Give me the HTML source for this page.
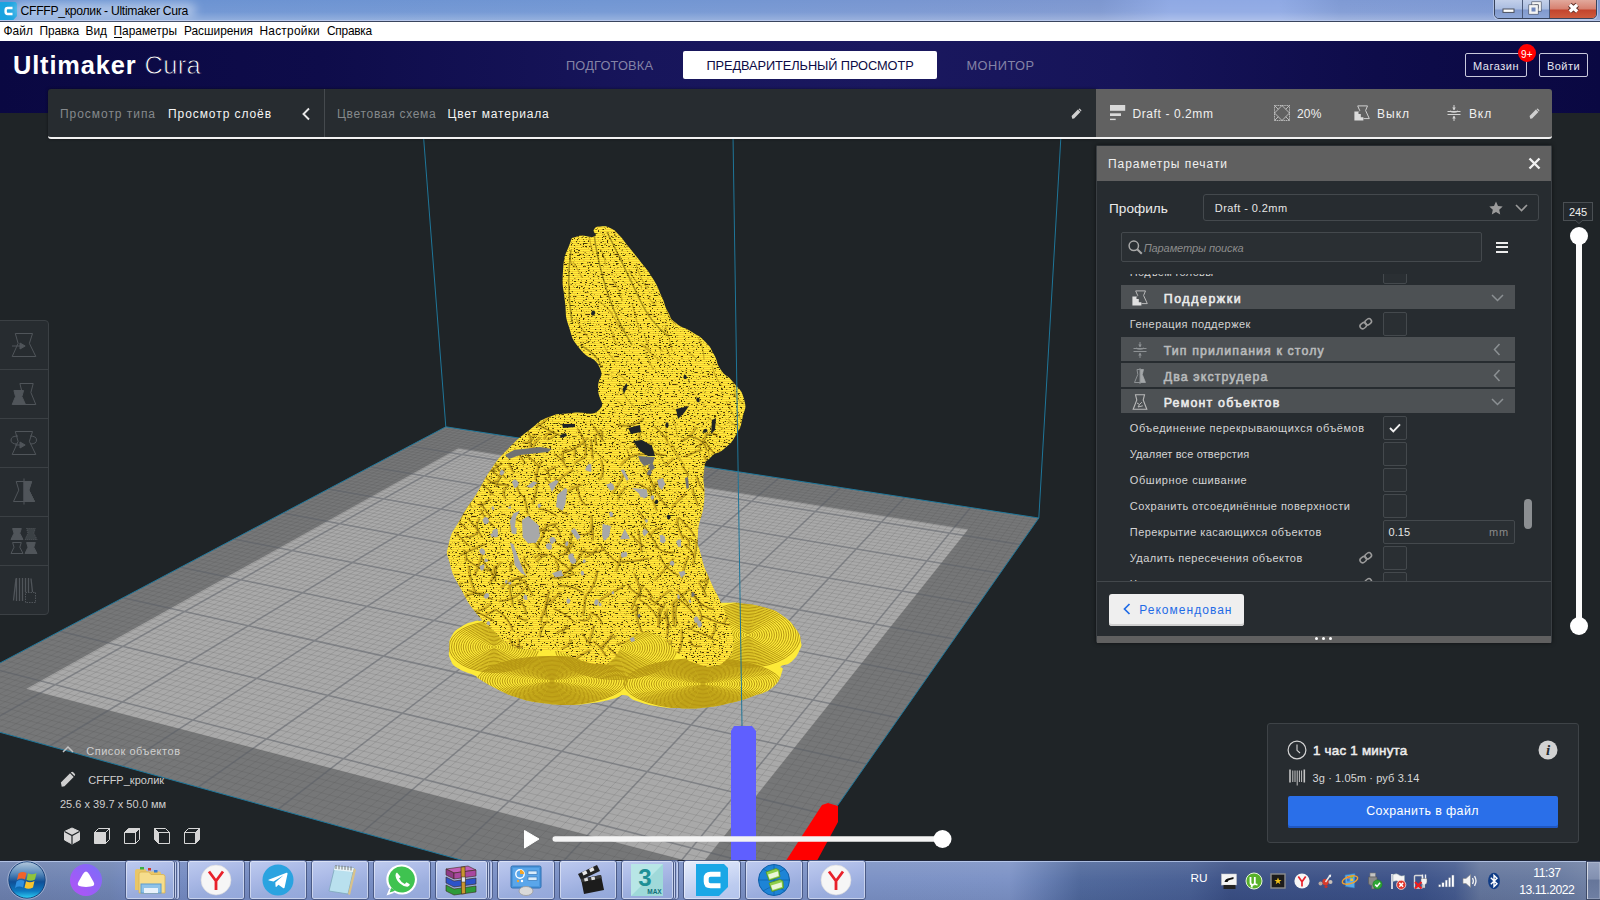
<!DOCTYPE html>
<html lang="ru"><head><meta charset="utf-8"><title>CFFFP_кролик - Ultimaker Cura</title>
<style>
html,body{margin:0;padding:0;overflow:hidden;}
body{width:1600px;height:900px;overflow:hidden;position:relative;background:#1f2427;font-family:"Liberation Sans", "DejaVu Sans", sans-serif;}
.t{position:absolute;white-space:pre;}
.abs{position:absolute;}
svg{position:absolute;overflow:visible;}
</style></head>
<body>
<!-- scene -->
<main id="viewport">
<svg width="1600" height="900" viewBox="0 0 1600 900" style="left:0;top:0">
<defs>
<filter id="speck" x="0" y="0" width="100%" height="100%" color-interpolation-filters="sRGB"><feTurbulence type="fractalNoise" baseFrequency="0.42 0.9" numOctaves="2" seed="5" result="n"/><feColorMatrix in="n" type="matrix" values="0 0 0 0 0.27  0 0 0 0 0.22  0 0 0 0 0.02  10 0 0 0 -6.05" result="d"/><feComposite in="d" in2="SourceGraphic" operator="in" result="dd"/><feMerge><feMergeNode in="SourceGraphic"/><feMergeNode in="dd"/></feMerge></filter>
<pattern id="rows" width="4" height="2" patternUnits="userSpaceOnUse"><rect width="4" height="2" fill="#ffee3a"/><rect y="1" width="4" height="1" fill="#f3cb33"/></pattern>
<clipPath id="vp"><rect x="0" y="113" width="1600" height="747"/></clipPath>
</defs>
<g clip-path="url(#vp)">
<polygon points="445.8,426.8 1038.8,518.0 744.5,938.5 -86.0,708.5" fill="#767778"/>
<polygon points="458.3,448.2 968.2,529.5 701.5,864.8 26.1,688.9" fill="#a9a9a9"/>
<path d="M450.9 427.6L-79.5 710.3M442.3 428.7L1037.0 520.6M456.0 428.4L-73.0 712.1M438.7 430.6L1035.2 523.1M461.1 429.1L-66.4 713.9M435.1 432.5L1033.4 525.7M466.2 429.9L-59.8 715.7M431.5 434.4L1031.6 528.3M471.3 430.7L-53.2 717.6M427.9 436.3L1029.7 531.0M476.5 431.5L-46.6 719.4M424.2 438.2L1027.9 533.6M481.6 432.3L-39.9 721.3M420.5 440.2L1026.0 536.3M486.8 433.1L-33.2 723.1M416.8 442.1L1024.1 539.0M492.0 433.9L-26.5 725.0M413.1 444.1L1022.2 541.7M502.4 435.5L-12.9 728.7M405.6 448.1L1018.3 547.3M507.7 436.3L-6.1 730.6M401.7 450.1L1016.4 550.0M512.9 437.1L0.7 732.5M397.9 452.2L1014.4 552.9M518.2 437.9L7.6 734.4M394.0 454.2L1012.4 555.7M523.5 438.8L14.5 736.3M390.1 456.3L1010.4 558.6M528.8 439.6L21.5 738.3M386.2 458.4L1008.4 561.5M534.1 440.4L28.5 740.2M382.3 460.5L1006.4 564.4M539.5 441.2L35.5 742.1M378.3 462.6L1004.3 567.3M544.8 442.0L42.5 744.1M374.3 464.7L1002.2 570.3M555.6 443.7L56.7 748.0M366.2 469.0L998.0 576.3M561.0 444.5L63.8 750.0M362.1 471.1L995.9 579.3M566.4 445.3L71.0 752.0M357.9 473.3L993.8 582.4M571.8 446.2L78.2 754.0M353.8 475.5L991.6 585.5M577.3 447.0L85.4 756.0M349.6 477.8L989.4 588.6M582.7 447.9L92.7 758.0M345.4 480.0L987.2 591.7M588.2 448.7L100.0 760.0M341.1 482.2L985.0 594.9M593.7 449.5L107.4 762.1M336.9 484.5L982.7 598.1M599.2 450.4L114.7 764.1M332.5 486.8L980.5 601.3M610.3 452.1L129.6 768.2M323.8 491.4L975.9 607.9M615.9 453.0L137.1 770.3M319.4 493.7L973.6 611.2M621.5 453.8L144.6 772.4M315.0 496.1L971.2 614.5M627.1 454.7L152.1 774.5M310.5 498.5L968.9 617.9M632.7 455.5L159.7 776.6M306.0 500.9L966.5 621.3M638.3 456.4L167.4 778.7M301.4 503.3L964.1 624.8M644.0 457.3L175.0 780.8M296.8 505.7L961.6 628.2M649.6 458.1L182.7 782.9M292.2 508.1L959.2 631.7M655.3 459.0L190.4 785.1M287.6 510.6L956.7 635.3M666.7 460.8L206.0 789.4M278.2 515.6L951.7 642.5M672.5 461.7L213.9 791.5M273.4 518.1L949.1 646.1M678.2 462.5L221.8 793.7M268.6 520.7L946.6 649.8M684.0 463.4L229.7 795.9M263.7 523.2L944.0 653.5M689.8 464.3L237.6 798.1M258.9 525.8L941.4 657.2M695.6 465.2L245.6 800.3M254.0 528.4L938.7 661.0M701.4 466.1L253.7 802.6M249.0 531.0L936.0 664.8M707.3 467.0L261.8 804.8M244.0 533.7L933.3 668.7M713.2 467.9L269.9 807.1M239.0 536.4L930.6 672.6M724.9 469.7L286.2 811.6M228.8 541.8L925.1 680.5M730.9 470.6L294.5 813.9M223.6 544.5L922.3 684.5M736.8 471.6L302.8 816.2M218.4 547.3L919.4 688.5M742.8 472.5L311.1 818.5M213.2 550.0L916.6 692.6M748.7 473.4L319.4 820.8M207.9 552.8L913.7 696.8M754.7 474.3L327.8 823.1M202.5 555.7L910.8 700.9M760.8 475.2L336.3 825.5M197.1 558.5L907.8 705.1M766.8 476.2L344.8 827.8M191.7 561.4L904.8 709.4M772.8 477.1L353.3 830.2M186.3 564.3L901.8 713.7M785.0 479.0L370.5 834.9M175.2 570.2L895.7 722.5M791.1 479.9L379.2 837.3M169.6 573.1L892.6 726.9M797.3 480.9L387.9 839.7M163.9 576.1L889.5 731.4M803.4 481.8L396.6 842.2M158.2 579.1L886.3 735.9M809.6 482.7L405.4 844.6M152.4 582.2L883.1 740.5M815.8 483.7L414.3 847.0M146.6 585.3L879.8 745.1M822.0 484.7L423.2 849.5M140.8 588.4L876.6 749.8M828.2 485.6L432.1 852.0M134.9 591.5L873.3 754.5M834.5 486.6L441.1 854.5M128.9 594.7L869.9 759.3M847.0 488.5L459.2 859.5M116.8 601.1L863.1 769.0M853.3 489.5L468.3 862.0M110.7 604.3L859.7 774.0M859.7 490.5L477.5 864.5M104.5 607.6L856.2 779.0M866.0 491.4L486.7 867.1M98.3 610.9L852.6 784.0M872.4 492.4L495.9 869.7M92.0 614.2L849.0 789.1M878.8 493.4L505.3 872.2M85.7 617.6L845.4 794.3M885.2 494.4L514.6 874.8M79.3 621.0L841.8 799.5M891.6 495.4L524.0 877.4M72.8 624.4L838.1 804.8M898.1 496.4L533.5 880.1M66.3 627.8L834.3 810.1M911.1 498.4L552.6 885.3M53.1 634.8L826.7 821.0M917.6 499.4L562.2 888.0M46.4 638.4L822.9 826.6M924.1 500.4L571.8 890.7M39.6 642.0L818.9 832.1M930.7 501.4L581.6 893.4M32.8 645.6L815.0 837.8M937.3 502.4L591.3 896.1M25.9 649.2L811.0 843.5M943.9 503.4L601.2 898.8M18.9 652.9L806.9 849.3M950.5 504.4L611.0 901.5M11.9 656.7L802.8 855.2M957.2 505.4L621.0 904.3M4.8 660.4L798.6 861.2M963.9 506.5L631.0 907.1M-2.4 664.2L794.4 867.2M977.3 508.5L651.1 912.6M-16.9 671.9L785.8 879.4M984.0 509.6L661.2 915.4M-24.3 675.8L781.5 885.7M990.8 510.6L671.4 918.3M-31.7 679.8L777.1 892.0M997.6 511.7L681.7 921.1M-39.3 683.7L772.6 898.4M1004.4 512.7L692.0 924.0M-46.9 687.8L768.1 904.8M1011.2 513.8L702.4 926.8M-54.5 691.8L763.5 911.4M1018.1 514.8L712.8 929.7M-62.3 695.9L758.8 918.0M1025.0 515.9L723.3 932.6M-70.1 700.1L754.1 924.8M1031.9 516.9L733.9 935.6M-78.0 704.3L749.3 931.6" stroke="#4c4e50" stroke-width="1" opacity=".17" fill="none"/>
<path d="M497.2 434.7L-19.7 726.9M409.3 446.1L1020.3 544.5M550.2 442.9L49.6 746.0M370.2 466.8L1000.1 573.2M604.8 451.2L122.2 766.1M328.2 489.1L978.2 604.6M661.0 459.9L198.2 787.2M282.9 513.1L954.2 638.9M719.0 468.8L278.0 809.3M233.9 539.1L927.9 676.5M778.9 478.0L361.9 832.5M180.7 567.2L898.8 718.1M840.7 487.5L450.1 857.0M122.9 597.8L866.5 764.1M904.6 497.4L543.0 882.7M59.7 631.3L830.6 815.5M970.6 507.5L641.0 909.8M-9.6 668.0L790.2 873.3" stroke="#585c64" stroke-width="1.5" opacity=".52" fill="none"/>
<g stroke="#1f7699" stroke-width="1" fill="none"><polygon points="445.8,426.8 1038.8,518.0 744.5,938.5 -86.0,708.5"/><path d="M445.8 426.8L423.4 135M1038.8 518L1061 135"/></g>
<clipPath id="bc"><path d="M449.3 647.8C449.6 641.6 448.5 641.8 451.6 636.3C454.7 630.8 454.6 631.0 460.8 627.0C467.0 623.0 468.0 623.1 474.7 621.2C481.4 619.3 473.9 622.5 486.0 620.0C498.1 617.5 489.6 615.7 520.0 612.0C550.4 608.3 557.3 608.4 600.0 606.0C642.7 603.6 646.8 603.9 680.0 603.0C713.2 602.1 708.3 602.6 724.5 602.7C740.7 602.8 730.1 602.0 740.6 603.2C751.1 604.4 752.7 604.0 763.8 607.3C774.9 610.6 773.7 609.5 782.3 615.4C790.9 621.3 791.2 622.5 796.1 629.3C801.0 636.1 799.9 635.4 800.8 640.9C801.7 646.4 802.1 644.6 799.6 650.1C797.1 655.6 796.4 657.4 791.5 661.7C786.6 666.0 783.6 663.8 781.1 666.3C778.6 668.8 784.5 665.5 782.3 671.0C780.1 676.5 781.0 680.3 773.0 687.1C765.0 693.9 763.9 692.1 752.2 696.4C740.5 700.7 741.4 700.3 729.1 703.3C716.8 706.3 718.3 706.1 706.0 707.5C693.7 708.9 695.1 708.6 682.8 708.4C670.5 708.2 672.0 708.8 659.7 706.8C647.4 704.8 645.9 704.1 636.6 701.0C627.3 697.9 631.2 695.8 625.0 695.2C618.8 694.6 622.8 696.5 613.5 698.7C604.2 700.9 602.6 701.6 590.3 703.3C578.0 705.0 579.5 705.0 567.2 705.0C554.9 705.0 556.3 705.0 544.0 703.3C531.7 701.6 533.3 702.4 521.0 698.7C508.7 695.0 508.9 694.7 497.8 689.4C486.7 684.1 485.5 682.7 479.3 679.0C473.1 675.3 480.2 678.4 474.7 675.6C469.2 672.8 465.0 672.9 458.5 668.6C452.0 664.3 452.9 664.9 450.4 659.4C447.9 653.9 449.0 654.0 449.3 647.8Z"/></clipPath>
<path d="M449.3 647.8C449.6 641.6 448.5 641.8 451.6 636.3C454.7 630.8 454.6 631.0 460.8 627.0C467.0 623.0 468.0 623.1 474.7 621.2C481.4 619.3 473.9 622.5 486.0 620.0C498.1 617.5 489.6 615.7 520.0 612.0C550.4 608.3 557.3 608.4 600.0 606.0C642.7 603.6 646.8 603.9 680.0 603.0C713.2 602.1 708.3 602.6 724.5 602.7C740.7 602.8 730.1 602.0 740.6 603.2C751.1 604.4 752.7 604.0 763.8 607.3C774.9 610.6 773.7 609.5 782.3 615.4C790.9 621.3 791.2 622.5 796.1 629.3C801.0 636.1 799.9 635.4 800.8 640.9C801.7 646.4 802.1 644.6 799.6 650.1C797.1 655.6 796.4 657.4 791.5 661.7C786.6 666.0 783.6 663.8 781.1 666.3C778.6 668.8 784.5 665.5 782.3 671.0C780.1 676.5 781.0 680.3 773.0 687.1C765.0 693.9 763.9 692.1 752.2 696.4C740.5 700.7 741.4 700.3 729.1 703.3C716.8 706.3 718.3 706.1 706.0 707.5C693.7 708.9 695.1 708.6 682.8 708.4C670.5 708.2 672.0 708.8 659.7 706.8C647.4 704.8 645.9 704.1 636.6 701.0C627.3 697.9 631.2 695.8 625.0 695.2C618.8 694.6 622.8 696.5 613.5 698.7C604.2 700.9 602.6 701.6 590.3 703.3C578.0 705.0 579.5 705.0 567.2 705.0C554.9 705.0 556.3 705.0 544.0 703.3C531.7 701.6 533.3 702.4 521.0 698.7C508.7 695.0 508.9 694.7 497.8 689.4C486.7 684.1 485.5 682.7 479.3 679.0C473.1 675.3 480.2 678.4 474.7 675.6C469.2 672.8 465.0 672.9 458.5 668.6C452.0 664.3 452.9 664.9 450.4 659.4C447.9 653.9 449.0 654.0 449.3 647.8Z" fill="#fdea38"/>
<g clip-path="url(#bc)" fill="none" stroke="#9a7606" stroke-width="1" opacity=".72"><ellipse cx="494" cy="647" rx="2.4" ry="1.3"/><ellipse cx="494" cy="647" rx="4.7" ry="2.7"/><ellipse cx="494" cy="647" rx="7.1" ry="4.0"/><ellipse cx="494" cy="647" rx="9.4" ry="5.3"/><ellipse cx="494" cy="647" rx="11.8" ry="6.7"/><ellipse cx="494" cy="647" rx="14.2" ry="8.0"/><ellipse cx="494" cy="647" rx="16.5" ry="9.3"/><ellipse cx="494" cy="647" rx="18.9" ry="10.7"/><ellipse cx="494" cy="647" rx="21.2" ry="12.0"/><ellipse cx="494" cy="647" rx="23.6" ry="13.3"/><ellipse cx="494" cy="647" rx="25.9" ry="14.7"/><ellipse cx="494" cy="647" rx="28.3" ry="16.0"/><ellipse cx="494" cy="647" rx="30.7" ry="17.3"/><ellipse cx="494" cy="647" rx="33.0" ry="18.7"/><ellipse cx="494" cy="647" rx="35.4" ry="20.0"/><ellipse cx="494" cy="647" rx="37.7" ry="21.3"/><ellipse cx="494" cy="647" rx="40.1" ry="22.7"/><ellipse cx="494" cy="647" rx="42.5" ry="24.0"/><ellipse cx="494" cy="647" rx="44.8" ry="25.3"/><ellipse cx="616" cy="648" rx="2.4" ry="1.3"/><ellipse cx="616" cy="648" rx="4.9" ry="2.5"/><ellipse cx="616" cy="648" rx="7.3" ry="3.8"/><ellipse cx="616" cy="648" rx="9.7" ry="5.0"/><ellipse cx="616" cy="648" rx="12.2" ry="6.3"/><ellipse cx="616" cy="648" rx="14.6" ry="7.5"/><ellipse cx="616" cy="648" rx="17.0" ry="8.8"/><ellipse cx="616" cy="648" rx="19.5" ry="10.0"/><ellipse cx="616" cy="648" rx="21.9" ry="11.3"/><ellipse cx="616" cy="648" rx="24.3" ry="12.5"/><ellipse cx="616" cy="648" rx="26.7" ry="13.8"/><ellipse cx="616" cy="648" rx="29.2" ry="15.1"/><ellipse cx="616" cy="648" rx="31.6" ry="16.3"/><ellipse cx="616" cy="648" rx="34.0" ry="17.6"/><ellipse cx="616" cy="648" rx="36.5" ry="18.8"/><ellipse cx="616" cy="648" rx="38.9" ry="20.1"/><ellipse cx="616" cy="648" rx="41.3" ry="21.3"/><ellipse cx="616" cy="648" rx="43.8" ry="22.6"/><ellipse cx="616" cy="648" rx="46.2" ry="23.8"/><ellipse cx="616" cy="648" rx="48.6" ry="25.1"/><ellipse cx="616" cy="648" rx="51.1" ry="26.4"/><ellipse cx="616" cy="648" rx="53.5" ry="27.6"/><ellipse cx="616" cy="648" rx="55.9" ry="28.9"/><ellipse cx="616" cy="648" rx="58.4" ry="30.1"/><ellipse cx="616" cy="648" rx="60.8" ry="31.4"/><ellipse cx="748" cy="635" rx="2.4" ry="1.5"/><ellipse cx="748" cy="635" rx="4.8" ry="2.9"/><ellipse cx="748" cy="635" rx="7.2" ry="4.4"/><ellipse cx="748" cy="635" rx="9.6" ry="5.9"/><ellipse cx="748" cy="635" rx="12.0" ry="7.3"/><ellipse cx="748" cy="635" rx="14.4" ry="8.8"/><ellipse cx="748" cy="635" rx="16.8" ry="10.3"/><ellipse cx="748" cy="635" rx="19.2" ry="11.7"/><ellipse cx="748" cy="635" rx="21.6" ry="13.2"/><ellipse cx="748" cy="635" rx="24.0" ry="14.7"/><ellipse cx="748" cy="635" rx="26.4" ry="16.1"/><ellipse cx="748" cy="635" rx="28.8" ry="17.6"/><ellipse cx="748" cy="635" rx="31.2" ry="19.1"/><ellipse cx="748" cy="635" rx="33.6" ry="20.5"/><ellipse cx="748" cy="635" rx="36.0" ry="22.0"/><ellipse cx="748" cy="635" rx="38.4" ry="23.5"/><ellipse cx="748" cy="635" rx="40.8" ry="24.9"/><ellipse cx="748" cy="635" rx="43.2" ry="26.4"/><ellipse cx="748" cy="635" rx="45.6" ry="27.9"/><ellipse cx="748" cy="635" rx="48.0" ry="29.3"/><ellipse cx="748" cy="635" rx="50.4" ry="30.8"/><ellipse cx="748" cy="635" rx="52.8" ry="32.3"/><ellipse cx="552" cy="681" rx="2.5" ry="0.8"/><ellipse cx="552" cy="681" rx="5.0" ry="1.6"/><ellipse cx="552" cy="681" rx="7.5" ry="2.5"/><ellipse cx="552" cy="681" rx="10.0" ry="3.3"/><ellipse cx="552" cy="681" rx="12.5" ry="4.1"/><ellipse cx="552" cy="681" rx="15.0" ry="4.9"/><ellipse cx="552" cy="681" rx="17.4" ry="5.7"/><ellipse cx="552" cy="681" rx="19.9" ry="6.6"/><ellipse cx="552" cy="681" rx="22.4" ry="7.4"/><ellipse cx="552" cy="681" rx="24.9" ry="8.2"/><ellipse cx="552" cy="681" rx="27.4" ry="9.0"/><ellipse cx="552" cy="681" rx="29.9" ry="9.8"/><ellipse cx="552" cy="681" rx="32.4" ry="10.7"/><ellipse cx="552" cy="681" rx="34.9" ry="11.5"/><ellipse cx="552" cy="681" rx="37.4" ry="12.3"/><ellipse cx="552" cy="681" rx="39.9" ry="13.1"/><ellipse cx="552" cy="681" rx="42.4" ry="13.9"/><ellipse cx="552" cy="681" rx="44.9" ry="14.8"/><ellipse cx="552" cy="681" rx="47.3" ry="15.6"/><ellipse cx="552" cy="681" rx="49.8" ry="16.4"/><ellipse cx="552" cy="681" rx="52.3" ry="17.2"/><ellipse cx="552" cy="681" rx="54.8" ry="18.0"/><ellipse cx="552" cy="681" rx="57.3" ry="18.9"/><ellipse cx="552" cy="681" rx="59.8" ry="19.7"/><ellipse cx="552" cy="681" rx="62.3" ry="20.5"/><ellipse cx="552" cy="681" rx="64.8" ry="21.3"/><ellipse cx="552" cy="681" rx="67.3" ry="22.1"/><ellipse cx="552" cy="681" rx="69.8" ry="23.0"/><ellipse cx="552" cy="681" rx="72.3" ry="23.8"/><ellipse cx="552" cy="681" rx="74.8" ry="24.6"/><ellipse cx="703" cy="684" rx="2.5" ry="0.8"/><ellipse cx="703" cy="684" rx="4.9" ry="1.6"/><ellipse cx="703" cy="684" rx="7.4" ry="2.4"/><ellipse cx="703" cy="684" rx="9.8" ry="3.2"/><ellipse cx="703" cy="684" rx="12.3" ry="4.0"/><ellipse cx="703" cy="684" rx="14.8" ry="4.8"/><ellipse cx="703" cy="684" rx="17.2" ry="5.6"/><ellipse cx="703" cy="684" rx="19.7" ry="6.4"/><ellipse cx="703" cy="684" rx="22.2" ry="7.2"/><ellipse cx="703" cy="684" rx="24.6" ry="8.0"/><ellipse cx="703" cy="684" rx="27.1" ry="8.8"/><ellipse cx="703" cy="684" rx="29.5" ry="9.6"/><ellipse cx="703" cy="684" rx="32.0" ry="10.4"/><ellipse cx="703" cy="684" rx="34.5" ry="11.2"/><ellipse cx="703" cy="684" rx="36.9" ry="12.0"/><ellipse cx="703" cy="684" rx="39.4" ry="12.8"/><ellipse cx="703" cy="684" rx="41.8" ry="13.6"/><ellipse cx="703" cy="684" rx="44.3" ry="14.4"/><ellipse cx="703" cy="684" rx="46.8" ry="15.2"/><ellipse cx="703" cy="684" rx="49.2" ry="16.0"/><ellipse cx="703" cy="684" rx="51.7" ry="16.8"/><ellipse cx="703" cy="684" rx="54.2" ry="17.6"/><ellipse cx="703" cy="684" rx="56.6" ry="18.4"/><ellipse cx="703" cy="684" rx="59.1" ry="19.2"/><ellipse cx="703" cy="684" rx="61.5" ry="20.0"/><ellipse cx="703" cy="684" rx="64.0" ry="20.8"/><ellipse cx="703" cy="684" rx="66.5" ry="21.6"/><ellipse cx="703" cy="684" rx="68.9" ry="22.4"/><ellipse cx="703" cy="684" rx="71.4" ry="23.2"/><ellipse cx="703" cy="684" rx="73.8" ry="24.0"/><ellipse cx="703" cy="684" rx="76.3" ry="24.8"/><ellipse cx="703" cy="684" rx="78.8" ry="25.6"/></g>
<polygon points="630,638 634,637 635,641 631,642" fill="#a7a8a9"/>
<clipPath id="rb"><path d="M601.0 226.5C606.1 226.2 605.6 225.9 611.0 228.5C616.4 231.1 613.9 229.8 619.0 235.0C624.1 240.2 621.7 238.2 628.0 246.0C634.3 253.8 632.6 251.4 640.0 261.0C647.4 270.6 646.0 267.5 652.5 278.0C659.0 288.5 656.9 285.8 661.5 296.0C666.1 306.2 663.6 303.9 668.0 312.0C672.4 320.1 668.8 317.0 676.0 323.0C683.2 329.0 683.3 326.4 692.0 332.0C700.7 337.6 698.4 334.8 705.0 341.5C711.6 348.2 709.2 345.9 714.0 354.5C718.8 363.1 715.3 361.8 721.0 370.0C726.7 378.2 726.1 373.3 733.0 382.0C739.9 390.7 741.1 388.2 744.0 399.0C746.9 409.8 744.9 407.2 742.5 418.0C740.1 428.8 741.5 425.7 736.0 435.0C730.5 444.3 731.5 442.4 724.0 449.0C716.5 455.6 717.0 450.4 711.0 457.0C705.0 463.6 706.1 457.5 704.0 471.0C701.9 484.5 705.8 483.4 704.0 502.0C702.2 520.6 698.9 517.1 698.0 533.0C697.1 548.9 697.4 540.9 701.0 555.0C704.6 569.1 703.7 565.0 710.0 580.0C716.3 595.0 715.7 590.0 722.0 605.0C728.3 620.0 727.7 617.1 731.0 630.0C734.3 642.9 734.5 639.0 733.0 648.0C731.5 657.0 732.0 654.6 726.0 660.0C720.0 665.4 721.4 664.8 713.0 666.0C704.6 667.2 707.3 667.0 698.0 664.0C688.7 661.0 691.0 662.3 682.0 656.0C673.0 649.7 676.1 649.6 668.0 643.0C659.9 636.4 663.4 637.0 655.0 634.0C646.6 631.0 648.7 630.6 640.0 633.0C631.3 635.4 634.4 633.9 626.0 642.0C617.6 650.1 619.8 653.4 612.0 660.0C604.2 666.6 609.6 664.0 600.0 664.0C590.4 664.0 592.0 663.6 580.0 660.0C568.0 656.4 575.0 655.0 560.0 652.0C545.0 649.0 545.0 652.1 530.0 650.0C515.0 647.9 520.5 650.4 510.0 645.0C499.5 639.6 504.9 641.3 495.0 632.0C485.1 622.7 487.2 626.9 477.0 614.0C466.8 601.1 469.1 604.0 461.0 589.0C452.9 574.0 453.6 577.8 450.0 564.0C446.4 550.2 445.7 556.8 449.0 543.0C452.3 529.2 452.6 533.0 461.0 518.0C469.4 503.0 467.7 508.0 477.0 493.0C486.3 478.0 482.7 481.2 492.0 468.0C501.3 454.8 496.6 460.6 508.0 449.0C519.4 437.4 517.7 439.1 530.0 429.5C542.3 419.9 536.4 421.9 549.0 417.0C561.6 412.1 557.0 415.1 572.0 413.0C587.0 410.9 591.2 417.5 599.0 410.0C606.8 402.5 597.9 400.9 598.0 388.0C598.1 375.1 604.8 378.7 599.4 367.0C594.0 355.3 589.1 361.0 580.0 349.0C570.9 337.0 573.5 341.1 569.0 327.0C564.5 312.9 566.8 318.8 565.0 302.0C563.2 285.2 561.8 287.8 563.0 271.0C564.2 254.2 564.8 256.4 569.0 246.0C573.2 235.7 569.5 239.3 577.0 236.5C584.5 233.7 588.9 238.6 594.0 236.5C599.1 234.4 591.9 232.5 594.0 229.5C596.1 226.5 595.9 226.8 601.0 226.5Z"/></clipPath>
<path d="M601.0 226.5C606.1 226.2 605.6 225.9 611.0 228.5C616.4 231.1 613.9 229.8 619.0 235.0C624.1 240.2 621.7 238.2 628.0 246.0C634.3 253.8 632.6 251.4 640.0 261.0C647.4 270.6 646.0 267.5 652.5 278.0C659.0 288.5 656.9 285.8 661.5 296.0C666.1 306.2 663.6 303.9 668.0 312.0C672.4 320.1 668.8 317.0 676.0 323.0C683.2 329.0 683.3 326.4 692.0 332.0C700.7 337.6 698.4 334.8 705.0 341.5C711.6 348.2 709.2 345.9 714.0 354.5C718.8 363.1 715.3 361.8 721.0 370.0C726.7 378.2 726.1 373.3 733.0 382.0C739.9 390.7 741.1 388.2 744.0 399.0C746.9 409.8 744.9 407.2 742.5 418.0C740.1 428.8 741.5 425.7 736.0 435.0C730.5 444.3 731.5 442.4 724.0 449.0C716.5 455.6 717.0 450.4 711.0 457.0C705.0 463.6 706.1 457.5 704.0 471.0C701.9 484.5 705.8 483.4 704.0 502.0C702.2 520.6 698.9 517.1 698.0 533.0C697.1 548.9 697.4 540.9 701.0 555.0C704.6 569.1 703.7 565.0 710.0 580.0C716.3 595.0 715.7 590.0 722.0 605.0C728.3 620.0 727.7 617.1 731.0 630.0C734.3 642.9 734.5 639.0 733.0 648.0C731.5 657.0 732.0 654.6 726.0 660.0C720.0 665.4 721.4 664.8 713.0 666.0C704.6 667.2 707.3 667.0 698.0 664.0C688.7 661.0 691.0 662.3 682.0 656.0C673.0 649.7 676.1 649.6 668.0 643.0C659.9 636.4 663.4 637.0 655.0 634.0C646.6 631.0 648.7 630.6 640.0 633.0C631.3 635.4 634.4 633.9 626.0 642.0C617.6 650.1 619.8 653.4 612.0 660.0C604.2 666.6 609.6 664.0 600.0 664.0C590.4 664.0 592.0 663.6 580.0 660.0C568.0 656.4 575.0 655.0 560.0 652.0C545.0 649.0 545.0 652.1 530.0 650.0C515.0 647.9 520.5 650.4 510.0 645.0C499.5 639.6 504.9 641.3 495.0 632.0C485.1 622.7 487.2 626.9 477.0 614.0C466.8 601.1 469.1 604.0 461.0 589.0C452.9 574.0 453.6 577.8 450.0 564.0C446.4 550.2 445.7 556.8 449.0 543.0C452.3 529.2 452.6 533.0 461.0 518.0C469.4 503.0 467.7 508.0 477.0 493.0C486.3 478.0 482.7 481.2 492.0 468.0C501.3 454.8 496.6 460.6 508.0 449.0C519.4 437.4 517.7 439.1 530.0 429.5C542.3 419.9 536.4 421.9 549.0 417.0C561.6 412.1 557.0 415.1 572.0 413.0C587.0 410.9 591.2 417.5 599.0 410.0C606.8 402.5 597.9 400.9 598.0 388.0C598.1 375.1 604.8 378.7 599.4 367.0C594.0 355.3 589.1 361.0 580.0 349.0C570.9 337.0 573.5 341.1 569.0 327.0C564.5 312.9 566.8 318.8 565.0 302.0C563.2 285.2 561.8 287.8 563.0 271.0C564.2 254.2 564.8 256.4 569.0 246.0C573.2 235.7 569.5 239.3 577.0 236.5C584.5 233.7 588.9 238.6 594.0 236.5C599.1 234.4 591.9 232.5 594.0 229.5C596.1 226.5 595.9 226.8 601.0 226.5Z" fill="url(#rows)" filter="url(#speck)"/>
<g clip-path="url(#rb)"><path d="M542.3 460.4Q537.0 464.8 535.0 479.8M594.6 433.8Q594.7 443.6 596.5 445.5M485.3 477.5Q494.3 486.4 505.8 483.9M463.3 626.7Q464.0 635.9 469.3 637.5M501.5 561.7Q492.8 566.3 494.7 581.5M508.7 584.9Q510.0 593.2 512.5 606.3M676.4 589.3Q686.8 600.4 688.2 606.0M532.1 655.3Q537.9 662.9 552.0 670.6M461.2 582.0Q450.8 595.5 444.9 604.2M619.4 561.3Q633.5 561.7 648.1 558.2M467.3 589.9Q477.1 593.1 492.1 599.0M640.6 430.3Q635.8 439.7 641.7 442.6M486.9 483.2Q491.9 482.3 498.1 480.2M701.8 617.5Q693.1 628.0 687.7 629.3M723.0 460.5Q727.9 466.8 733.2 470.9M524.9 426.0Q532.4 438.7 529.0 446.9M596.9 570.1Q594.5 587.4 585.4 595.7M677.4 517.2Q674.9 523.0 682.9 539.2M509.5 463.1Q507.2 463.0 513.3 472.4M553.6 431.0Q545.6 433.2 543.5 439.1M553.8 453.9Q560.1 456.1 566.7 468.2M479.1 505.5Q479.0 507.4 490.3 498.4M600.6 459.5Q605.2 474.0 598.4 479.9M648.4 486.4Q652.8 501.8 656.4 510.5M544.0 477.4Q557.5 490.4 563.8 495.8M660.9 478.3Q655.0 480.9 660.4 488.9M523.9 587.7Q516.9 599.8 498.3 600.9M553.9 476.8Q559.7 487.2 562.5 488.0M689.5 537.7Q696.9 544.7 700.4 541.9M673.0 601.3Q671.6 617.8 674.3 627.0M726.9 518.0Q734.9 510.7 750.7 512.3M493.1 637.6Q489.9 649.4 475.3 657.3M549.9 553.9Q563.1 563.6 572.7 572.5M716.1 526.9Q717.6 530.0 725.0 538.0M518.6 562.8Q526.9 566.3 525.5 573.4M580.6 562.1Q568.9 570.5 557.2 578.1M599.2 429.4Q603.5 430.5 600.7 439.4M584.9 595.4Q584.2 608.9 582.2 615.6M480.2 556.7Q487.6 567.9 494.7 577.6M666.6 639.4Q668.1 651.7 669.3 659.4M578.9 550.3Q595.4 555.0 602.9 549.1M524.0 556.5Q522.5 561.4 530.2 567.6M470.7 481.6Q486.4 484.1 492.6 494.9M654.1 580.2Q660.3 574.5 673.3 558.0M563.5 539.5Q565.2 545.8 568.6 551.7M546.6 471.0Q552.0 468.1 556.1 466.6M455.2 502.9Q459.3 511.8 451.9 513.7M726.9 449.6Q731.0 456.0 740.6 471.2M570.3 639.2Q570.9 644.7 561.4 648.6M649.6 446.0Q652.6 455.8 665.8 455.0M630.8 613.4Q638.2 608.1 636.9 603.9M546.7 555.0Q541.6 555.1 535.9 561.5M481.2 462.9Q486.0 469.9 495.5 470.6M532.6 542.5Q533.3 540.4 539.9 549.9M658.9 554.5Q663.9 568.9 678.4 575.6M573.2 541.3Q568.2 554.1 558.7 555.3M547.7 620.6Q541.5 623.2 539.1 636.5M487.0 441.6Q478.4 451.3 479.8 452.7M698.1 582.6Q701.6 585.3 706.0 596.3M577.1 486.9Q578.7 501.8 586.4 505.6M538.2 508.8Q547.3 508.8 556.4 515.9M593.8 426.2Q593.2 428.0 603.5 441.3M536.7 479.7Q536.1 494.5 531.6 504.2M700.5 516.5Q709.2 515.6 712.4 511.3M462.5 621.3Q456.3 624.2 442.6 635.8M599.3 543.5Q609.5 557.8 617.7 562.6M644.6 587.9Q646.8 588.2 652.3 598.0M688.2 556.3Q684.5 561.6 681.1 578.8M677.3 600.8Q672.1 615.3 677.2 624.0M521.9 442.5Q530.7 444.4 533.8 435.0M590.8 514.9Q592.8 529.3 592.1 540.2M472.1 459.6Q479.6 449.3 485.4 450.7M467.3 488.2Q460.1 499.1 457.9 509.7M582.4 534.6Q592.4 534.3 591.0 523.5M455.0 532.9Q459.0 536.0 468.7 546.0M719.5 474.5Q722.9 480.2 715.5 494.6M683.8 544.6Q692.9 550.2 692.5 556.3M457.1 425.8Q452.9 432.0 457.4 441.9M540.1 622.5Q540.4 615.1 549.9 597.5M653.2 636.9Q663.5 645.8 661.9 652.5M552.8 525.6Q559.9 528.2 559.0 535.9M716.6 483.6Q718.8 494.9 724.0 495.3M702.0 615.8Q716.3 622.9 729.4 624.7M464.1 597.1Q472.9 590.3 486.8 594.4M714.1 454.9Q717.5 468.6 715.2 470.8M524.1 579.2Q524.3 583.0 532.4 595.0M509.2 637.9Q515.3 651.4 509.5 666.0M489.8 470.2Q491.6 470.6 499.6 476.8M612.3 633.5Q607.5 639.6 602.0 648.6M546.4 439.6Q551.8 438.0 557.2 433.2M695.9 475.8Q700.0 488.9 705.3 491.1M691.9 630.1Q707.7 634.8 713.9 640.0M617.3 425.0Q634.4 427.3 643.0 418.2M520.8 450.6Q534.8 461.3 538.3 466.6M634.5 604.7Q638.4 606.9 635.6 615.5M712.2 576.7Q717.2 585.8 719.0 590.1M482.0 441.5Q478.1 451.6 480.9 459.3M453.0 495.9Q469.0 494.5 475.8 493.7M516.9 483.1Q514.8 490.3 524.2 497.5M642.2 523.7Q646.8 530.0 657.9 547.5M546.3 523.8Q543.7 535.6 535.4 547.3M508.5 652.9Q511.7 652.9 521.6 646.5M534.1 648.7Q533.1 657.9 534.2 663.2M720.4 459.4Q719.8 468.3 727.9 487.9M467.1 517.4Q480.2 532.7 481.4 537.6M543.8 468.6Q548.5 471.7 549.2 477.8M556.6 502.9Q560.3 513.9 567.7 513.9M485.3 651.6Q497.7 660.9 502.3 671.8M464.0 536.3Q469.0 538.9 477.3 532.1M458.6 521.5Q457.0 520.0 466.6 528.9M712.2 485.4Q716.4 495.6 726.1 494.8M625.8 486.6Q616.0 496.4 618.1 500.1M711.2 574.0Q704.5 583.0 698.4 581.1M721.9 515.8Q732.6 520.2 733.1 532.2M678.7 598.5Q684.6 604.1 694.6 614.0M553.1 608.8Q560.7 610.3 574.4 622.1M459.7 554.9Q478.1 546.4 484.9 543.6M474.0 447.7Q480.2 446.6 492.9 447.6M626.8 583.4Q631.9 594.0 646.1 596.5M533.7 558.2Q537.4 553.1 547.1 554.0M493.7 632.8Q497.9 641.7 490.4 650.4M515.9 615.0Q521.3 621.0 527.2 619.3M689.6 639.9Q691.4 648.3 700.6 645.5M616.2 643.6Q622.4 644.1 634.3 637.9M719.5 449.9Q716.3 452.5 716.3 463.8M508.1 484.9Q500.6 489.7 504.8 498.6M643.3 468.5Q649.5 474.9 654.6 491.8M478.9 517.9Q474.2 526.1 477.5 529.6M566.8 491.6Q574.9 486.2 581.3 484.3M568.7 628.1Q564.9 627.1 555.7 633.3M451.7 636.9Q465.2 634.8 469.5 633.6M496.3 428.5Q489.7 443.9 492.9 456.5M555.7 543.5Q568.5 545.6 571.0 557.0M589.8 614.1Q589.5 622.6 578.5 619.6M587.6 437.5Q577.0 448.8 563.6 452.2M495.7 609.7Q508.0 616.4 512.4 630.8M512.2 518.9Q508.9 527.9 511.6 531.4M705.7 434.7Q715.1 430.9 716.4 436.3M620.9 554.3Q619.1 562.1 615.4 571.8M637.8 530.0Q639.3 537.9 641.1 552.1M667.6 608.3Q663.9 613.5 669.6 627.7M572.7 446.6Q575.1 446.9 574.2 457.3M659.0 607.7Q657.3 623.2 658.5 627.8M488.8 626.4Q490.0 644.4 498.6 650.8M590.2 649.8Q584.5 651.6 568.5 663.8M550.0 602.7Q559.1 592.8 560.6 591.4M593.1 641.2Q597.4 643.3 606.1 656.6M501.9 462.9Q485.8 473.3 477.7 476.9M482.8 549.7Q479.1 563.7 474.0 575.7M701.5 449.6Q696.8 450.1 685.0 456.4M732.3 560.7Q737.3 560.5 750.1 554.5M463.8 617.7Q473.1 631.9 480.3 642.3M539.1 425.4Q548.3 430.4 559.2 435.2M705.2 456.0Q702.4 458.4 711.6 464.3M480.3 508.9Q483.5 519.0 493.7 526.1M585.3 456.7Q574.9 461.6 574.1 463.2M698.3 608.8Q701.3 614.5 700.7 618.8M549.8 576.7Q559.0 579.9 574.3 573.4M462.5 549.9Q467.1 549.5 465.0 560.8M607.0 646.1Q615.5 655.1 623.8 660.6M681.8 466.0Q688.9 474.4 686.7 475.9M653.9 426.5Q663.3 433.0 667.0 440.7M514.4 449.7Q522.4 458.8 524.4 463.1M690.9 592.2Q699.4 600.4 700.9 608.1M525.6 575.9Q507.4 579.1 500.8 588.0M517.3 599.8Q525.8 605.0 525.3 614.3M518.2 638.3Q520.3 649.0 511.0 660.5M689.3 588.9Q680.9 594.6 670.8 605.0M510.4 571.3Q508.1 561.1 517.2 560.4M714.8 506.0Q721.2 511.2 723.0 513.1M648.6 598.1Q659.9 606.3 663.6 606.8M704.0 440.5Q708.5 448.1 722.4 462.8M481.9 433.1Q493.4 443.1 497.1 449.9M531.9 448.5Q533.7 441.8 539.9 436.9M456.0 485.3Q461.3 486.6 471.0 476.7M593.6 625.1Q590.3 637.1 588.5 642.6M548.8 590.6Q542.7 608.0 546.4 617.7M498.6 425.3Q503.8 415.5 520.9 405.9M590.1 612.2Q599.9 615.5 601.7 624.5M719.0 491.7Q720.6 501.0 731.6 507.1M473.1 610.2Q481.4 614.1 493.1 620.4M562.5 634.2Q561.8 627.0 568.2 625.4M706.8 542.8Q713.4 541.1 720.9 538.6M665.0 602.0Q658.1 613.8 659.4 617.5M638.7 599.4Q648.7 603.8 656.9 617.2M581.7 633.0Q588.8 643.6 591.1 646.0M494.1 461.7Q495.8 468.0 505.7 478.5M503.9 654.2Q491.5 665.3 488.7 679.1M730.4 611.8Q728.4 613.0 723.0 623.6M508.8 516.3Q522.8 521.9 532.1 527.5M630.2 533.9Q640.0 544.7 643.9 545.7M572.6 559.9Q571.1 570.5 564.4 571.9M670.6 589.5Q661.5 594.9 653.5 604.7M629.1 448.0Q642.5 442.7 652.9 443.3M570.7 532.0Q572.5 539.4 564.0 554.5M636.5 607.9Q634.9 622.6 644.3 636.3M495.8 608.7Q491.5 612.2 485.4 614.6M654.4 545.4Q663.0 554.1 673.7 552.1M509.9 585.8Q521.7 582.5 521.9 582.6M466.1 489.5Q467.4 500.8 470.5 507.3M550.4 487.3Q562.0 475.1 573.1 469.6M678.4 517.1Q690.3 528.6 694.7 536.8M583.7 557.1Q592.1 555.7 597.2 546.7M682.6 535.0Q689.6 538.8 688.5 546.0M692.4 487.8Q691.4 490.7 697.9 505.6M655.7 491.1Q660.5 500.7 667.0 507.1M637.9 510.2Q644.7 519.8 643.6 519.7M673.5 458.0Q663.9 467.0 666.1 465.2M636.9 483.8Q646.3 486.1 648.9 492.2M493.5 637.5Q485.9 651.5 475.6 658.8M640.5 635.1Q648.2 639.9 651.3 644.0M661.4 528.1Q652.2 528.4 649.3 537.4M590.5 438.7Q591.3 449.1 592.1 458.5M695.9 426.6Q690.2 437.9 680.4 441.1M556.9 523.4Q548.3 522.9 536.5 533.6M623.8 585.4Q611.1 592.8 598.3 600.5M705.8 433.0Q706.0 438.6 697.4 447.5M585.2 548.5Q578.7 556.6 573.9 563.4M685.6 493.8Q675.8 501.0 671.4 508.0M727.9 578.8Q720.2 586.1 717.3 591.3M630.9 609.3Q637.7 591.5 643.4 584.5M535.6 426.5Q545.7 422.4 551.9 411.4M709.3 568.8Q707.2 582.4 702.7 591.8M510.6 581.7Q512.7 575.6 522.5 580.5M670.7 639.8Q669.4 652.9 661.1 664.4M523.5 496.0Q527.0 510.3 527.0 514.3M465.6 558.4Q478.2 569.3 489.0 570.1M577.2 428.3Q586.9 441.9 585.0 456.0M567.5 449.0Q559.5 449.2 563.1 461.2M644.9 453.6Q628.1 453.8 620.2 465.6M655.0 481.9Q655.4 489.2 649.2 491.3M693.8 596.5Q703.5 608.2 714.1 609.6M522.4 651.6Q521.7 659.9 517.3 660.5M472.7 498.1Q465.4 504.4 458.5 521.3M554.8 560.1Q559.3 564.9 556.7 572.9M633.8 573.0Q641.7 589.0 638.8 598.2M611.5 493.7Q621.4 481.2 623.4 472.8M622.7 654.7Q616.0 665.0 611.1 666.0M557.4 585.9Q567.4 583.1 582.7 592.3M525.0 524.3Q533.1 531.2 552.1 530.0M681.3 628.8Q682.7 644.3 676.7 655.4M710.4 506.5Q717.7 516.6 732.2 520.6M715.5 480.0Q709.6 486.4 710.7 498.7M664.1 611.0Q668.6 620.8 666.6 637.0M615.2 635.8Q608.5 637.9 599.6 647.6M504.8 467.5Q498.7 477.1 494.9 486.3M492.5 435.5Q488.4 441.2 481.2 440.0M494.5 565.3Q490.8 576.1 498.3 575.0M696.8 539.3Q693.9 557.3 692.7 564.5M668.7 617.4Q660.3 616.0 659.0 622.2M473.8 437.0Q488.7 443.2 492.8 439.6M468.3 565.5Q468.9 580.5 475.4 593.8M632.6 649.8Q624.7 664.1 625.1 667.2M732.6 477.1Q745.1 485.8 747.9 484.7M688.6 436.1Q703.3 438.0 706.3 450.6M491.3 602.4Q485.4 609.5 477.4 610.3M480.0 501.1Q481.5 506.2 490.9 517.5M490.8 584.2Q487.9 583.0 496.2 571.4M512.9 644.5Q516.3 644.6 521.0 654.3M714.7 622.9Q716.0 630.7 709.6 638.9" fill="none" stroke="#a87806" stroke-width="2" opacity=".42"/><path d="M542.3 460.4Q537.0 464.8 535.0 479.8M594.6 433.8Q594.7 443.6 596.5 445.5M485.3 477.5Q494.3 486.4 505.8 483.9M463.3 626.7Q464.0 635.9 469.3 637.5M501.5 561.7Q492.8 566.3 494.7 581.5M508.7 584.9Q510.0 593.2 512.5 606.3M676.4 589.3Q686.8 600.4 688.2 606.0M532.1 655.3Q537.9 662.9 552.0 670.6M461.2 582.0Q450.8 595.5 444.9 604.2M619.4 561.3Q633.5 561.7 648.1 558.2M467.3 589.9Q477.1 593.1 492.1 599.0M640.6 430.3Q635.8 439.7 641.7 442.6M486.9 483.2Q491.9 482.3 498.1 480.2M701.8 617.5Q693.1 628.0 687.7 629.3M723.0 460.5Q727.9 466.8 733.2 470.9M524.9 426.0Q532.4 438.7 529.0 446.9M596.9 570.1Q594.5 587.4 585.4 595.7M677.4 517.2Q674.9 523.0 682.9 539.2M509.5 463.1Q507.2 463.0 513.3 472.4M553.6 431.0Q545.6 433.2 543.5 439.1M553.8 453.9Q560.1 456.1 566.7 468.2M479.1 505.5Q479.0 507.4 490.3 498.4M600.6 459.5Q605.2 474.0 598.4 479.9M648.4 486.4Q652.8 501.8 656.4 510.5M544.0 477.4Q557.5 490.4 563.8 495.8M660.9 478.3Q655.0 480.9 660.4 488.9M523.9 587.7Q516.9 599.8 498.3 600.9M553.9 476.8Q559.7 487.2 562.5 488.0M689.5 537.7Q696.9 544.7 700.4 541.9M673.0 601.3Q671.6 617.8 674.3 627.0M726.9 518.0Q734.9 510.7 750.7 512.3M493.1 637.6Q489.9 649.4 475.3 657.3M549.9 553.9Q563.1 563.6 572.7 572.5M716.1 526.9Q717.6 530.0 725.0 538.0M518.6 562.8Q526.9 566.3 525.5 573.4M580.6 562.1Q568.9 570.5 557.2 578.1M599.2 429.4Q603.5 430.5 600.7 439.4M584.9 595.4Q584.2 608.9 582.2 615.6M480.2 556.7Q487.6 567.9 494.7 577.6M666.6 639.4Q668.1 651.7 669.3 659.4M578.9 550.3Q595.4 555.0 602.9 549.1M524.0 556.5Q522.5 561.4 530.2 567.6M470.7 481.6Q486.4 484.1 492.6 494.9M654.1 580.2Q660.3 574.5 673.3 558.0M563.5 539.5Q565.2 545.8 568.6 551.7M546.6 471.0Q552.0 468.1 556.1 466.6M455.2 502.9Q459.3 511.8 451.9 513.7M726.9 449.6Q731.0 456.0 740.6 471.2M570.3 639.2Q570.9 644.7 561.4 648.6M649.6 446.0Q652.6 455.8 665.8 455.0M630.8 613.4Q638.2 608.1 636.9 603.9M546.7 555.0Q541.6 555.1 535.9 561.5M481.2 462.9Q486.0 469.9 495.5 470.6M532.6 542.5Q533.3 540.4 539.9 549.9M658.9 554.5Q663.9 568.9 678.4 575.6M573.2 541.3Q568.2 554.1 558.7 555.3M547.7 620.6Q541.5 623.2 539.1 636.5M487.0 441.6Q478.4 451.3 479.8 452.7M698.1 582.6Q701.6 585.3 706.0 596.3M577.1 486.9Q578.7 501.8 586.4 505.6M538.2 508.8Q547.3 508.8 556.4 515.9M593.8 426.2Q593.2 428.0 603.5 441.3M536.7 479.7Q536.1 494.5 531.6 504.2M700.5 516.5Q709.2 515.6 712.4 511.3M462.5 621.3Q456.3 624.2 442.6 635.8M599.3 543.5Q609.5 557.8 617.7 562.6M644.6 587.9Q646.8 588.2 652.3 598.0M688.2 556.3Q684.5 561.6 681.1 578.8M677.3 600.8Q672.1 615.3 677.2 624.0M521.9 442.5Q530.7 444.4 533.8 435.0M590.8 514.9Q592.8 529.3 592.1 540.2M472.1 459.6Q479.6 449.3 485.4 450.7M467.3 488.2Q460.1 499.1 457.9 509.7M582.4 534.6Q592.4 534.3 591.0 523.5M455.0 532.9Q459.0 536.0 468.7 546.0M719.5 474.5Q722.9 480.2 715.5 494.6M683.8 544.6Q692.9 550.2 692.5 556.3M457.1 425.8Q452.9 432.0 457.4 441.9M540.1 622.5Q540.4 615.1 549.9 597.5M653.2 636.9Q663.5 645.8 661.9 652.5M552.8 525.6Q559.9 528.2 559.0 535.9M716.6 483.6Q718.8 494.9 724.0 495.3M702.0 615.8Q716.3 622.9 729.4 624.7M464.1 597.1Q472.9 590.3 486.8 594.4M714.1 454.9Q717.5 468.6 715.2 470.8M524.1 579.2Q524.3 583.0 532.4 595.0M509.2 637.9Q515.3 651.4 509.5 666.0M489.8 470.2Q491.6 470.6 499.6 476.8M612.3 633.5Q607.5 639.6 602.0 648.6M546.4 439.6Q551.8 438.0 557.2 433.2M695.9 475.8Q700.0 488.9 705.3 491.1M691.9 630.1Q707.7 634.8 713.9 640.0M617.3 425.0Q634.4 427.3 643.0 418.2M520.8 450.6Q534.8 461.3 538.3 466.6M634.5 604.7Q638.4 606.9 635.6 615.5M712.2 576.7Q717.2 585.8 719.0 590.1M482.0 441.5Q478.1 451.6 480.9 459.3M453.0 495.9Q469.0 494.5 475.8 493.7M516.9 483.1Q514.8 490.3 524.2 497.5M642.2 523.7Q646.8 530.0 657.9 547.5M546.3 523.8Q543.7 535.6 535.4 547.3M508.5 652.9Q511.7 652.9 521.6 646.5M534.1 648.7Q533.1 657.9 534.2 663.2M720.4 459.4Q719.8 468.3 727.9 487.9M467.1 517.4Q480.2 532.7 481.4 537.6M543.8 468.6Q548.5 471.7 549.2 477.8M556.6 502.9Q560.3 513.9 567.7 513.9M485.3 651.6Q497.7 660.9 502.3 671.8M464.0 536.3Q469.0 538.9 477.3 532.1M458.6 521.5Q457.0 520.0 466.6 528.9M712.2 485.4Q716.4 495.6 726.1 494.8M625.8 486.6Q616.0 496.4 618.1 500.1M711.2 574.0Q704.5 583.0 698.4 581.1M721.9 515.8Q732.6 520.2 733.1 532.2M678.7 598.5Q684.6 604.1 694.6 614.0M553.1 608.8Q560.7 610.3 574.4 622.1M459.7 554.9Q478.1 546.4 484.9 543.6M474.0 447.7Q480.2 446.6 492.9 447.6M626.8 583.4Q631.9 594.0 646.1 596.5M533.7 558.2Q537.4 553.1 547.1 554.0M493.7 632.8Q497.9 641.7 490.4 650.4M515.9 615.0Q521.3 621.0 527.2 619.3M689.6 639.9Q691.4 648.3 700.6 645.5M616.2 643.6Q622.4 644.1 634.3 637.9M719.5 449.9Q716.3 452.5 716.3 463.8M508.1 484.9Q500.6 489.7 504.8 498.6M643.3 468.5Q649.5 474.9 654.6 491.8M478.9 517.9Q474.2 526.1 477.5 529.6M566.8 491.6Q574.9 486.2 581.3 484.3M568.7 628.1Q564.9 627.1 555.7 633.3M451.7 636.9Q465.2 634.8 469.5 633.6M496.3 428.5Q489.7 443.9 492.9 456.5M555.7 543.5Q568.5 545.6 571.0 557.0M589.8 614.1Q589.5 622.6 578.5 619.6M587.6 437.5Q577.0 448.8 563.6 452.2M495.7 609.7Q508.0 616.4 512.4 630.8M512.2 518.9Q508.9 527.9 511.6 531.4M705.7 434.7Q715.1 430.9 716.4 436.3M620.9 554.3Q619.1 562.1 615.4 571.8M637.8 530.0Q639.3 537.9 641.1 552.1M667.6 608.3Q663.9 613.5 669.6 627.7M572.7 446.6Q575.1 446.9 574.2 457.3M659.0 607.7Q657.3 623.2 658.5 627.8M488.8 626.4Q490.0 644.4 498.6 650.8M590.2 649.8Q584.5 651.6 568.5 663.8M550.0 602.7Q559.1 592.8 560.6 591.4M593.1 641.2Q597.4 643.3 606.1 656.6M501.9 462.9Q485.8 473.3 477.7 476.9M482.8 549.7Q479.1 563.7 474.0 575.7M701.5 449.6Q696.8 450.1 685.0 456.4M732.3 560.7Q737.3 560.5 750.1 554.5M463.8 617.7Q473.1 631.9 480.3 642.3M539.1 425.4Q548.3 430.4 559.2 435.2M705.2 456.0Q702.4 458.4 711.6 464.3M480.3 508.9Q483.5 519.0 493.7 526.1M585.3 456.7Q574.9 461.6 574.1 463.2M698.3 608.8Q701.3 614.5 700.7 618.8M549.8 576.7Q559.0 579.9 574.3 573.4M462.5 549.9Q467.1 549.5 465.0 560.8M607.0 646.1Q615.5 655.1 623.8 660.6M681.8 466.0Q688.9 474.4 686.7 475.9M653.9 426.5Q663.3 433.0 667.0 440.7M514.4 449.7Q522.4 458.8 524.4 463.1M690.9 592.2Q699.4 600.4 700.9 608.1M525.6 575.9Q507.4 579.1 500.8 588.0M517.3 599.8Q525.8 605.0 525.3 614.3M518.2 638.3Q520.3 649.0 511.0 660.5M689.3 588.9Q680.9 594.6 670.8 605.0M510.4 571.3Q508.1 561.1 517.2 560.4M714.8 506.0Q721.2 511.2 723.0 513.1M648.6 598.1Q659.9 606.3 663.6 606.8M704.0 440.5Q708.5 448.1 722.4 462.8M481.9 433.1Q493.4 443.1 497.1 449.9M531.9 448.5Q533.7 441.8 539.9 436.9M456.0 485.3Q461.3 486.6 471.0 476.7M593.6 625.1Q590.3 637.1 588.5 642.6M548.8 590.6Q542.7 608.0 546.4 617.7M498.6 425.3Q503.8 415.5 520.9 405.9M590.1 612.2Q599.9 615.5 601.7 624.5M719.0 491.7Q720.6 501.0 731.6 507.1M473.1 610.2Q481.4 614.1 493.1 620.4M562.5 634.2Q561.8 627.0 568.2 625.4M706.8 542.8Q713.4 541.1 720.9 538.6M665.0 602.0Q658.1 613.8 659.4 617.5M638.7 599.4Q648.7 603.8 656.9 617.2M581.7 633.0Q588.8 643.6 591.1 646.0M494.1 461.7Q495.8 468.0 505.7 478.5M503.9 654.2Q491.5 665.3 488.7 679.1M730.4 611.8Q728.4 613.0 723.0 623.6M508.8 516.3Q522.8 521.9 532.1 527.5M630.2 533.9Q640.0 544.7 643.9 545.7M572.6 559.9Q571.1 570.5 564.4 571.9M670.6 589.5Q661.5 594.9 653.5 604.7M629.1 448.0Q642.5 442.7 652.9 443.3M570.7 532.0Q572.5 539.4 564.0 554.5M636.5 607.9Q634.9 622.6 644.3 636.3M495.8 608.7Q491.5 612.2 485.4 614.6M654.4 545.4Q663.0 554.1 673.7 552.1M509.9 585.8Q521.7 582.5 521.9 582.6M466.1 489.5Q467.4 500.8 470.5 507.3M550.4 487.3Q562.0 475.1 573.1 469.6M678.4 517.1Q690.3 528.6 694.7 536.8M583.7 557.1Q592.1 555.7 597.2 546.7M682.6 535.0Q689.6 538.8 688.5 546.0M692.4 487.8Q691.4 490.7 697.9 505.6M655.7 491.1Q660.5 500.7 667.0 507.1M637.9 510.2Q644.7 519.8 643.6 519.7M673.5 458.0Q663.9 467.0 666.1 465.2M636.9 483.8Q646.3 486.1 648.9 492.2M493.5 637.5Q485.9 651.5 475.6 658.8M640.5 635.1Q648.2 639.9 651.3 644.0M661.4 528.1Q652.2 528.4 649.3 537.4M590.5 438.7Q591.3 449.1 592.1 458.5M695.9 426.6Q690.2 437.9 680.4 441.1M556.9 523.4Q548.3 522.9 536.5 533.6M623.8 585.4Q611.1 592.8 598.3 600.5M705.8 433.0Q706.0 438.6 697.4 447.5M585.2 548.5Q578.7 556.6 573.9 563.4M685.6 493.8Q675.8 501.0 671.4 508.0M727.9 578.8Q720.2 586.1 717.3 591.3M630.9 609.3Q637.7 591.5 643.4 584.5M535.6 426.5Q545.7 422.4 551.9 411.4M709.3 568.8Q707.2 582.4 702.7 591.8M510.6 581.7Q512.7 575.6 522.5 580.5M670.7 639.8Q669.4 652.9 661.1 664.4M523.5 496.0Q527.0 510.3 527.0 514.3M465.6 558.4Q478.2 569.3 489.0 570.1M577.2 428.3Q586.9 441.9 585.0 456.0M567.5 449.0Q559.5 449.2 563.1 461.2M644.9 453.6Q628.1 453.8 620.2 465.6M655.0 481.9Q655.4 489.2 649.2 491.3M693.8 596.5Q703.5 608.2 714.1 609.6M522.4 651.6Q521.7 659.9 517.3 660.5M472.7 498.1Q465.4 504.4 458.5 521.3M554.8 560.1Q559.3 564.9 556.7 572.9M633.8 573.0Q641.7 589.0 638.8 598.2M611.5 493.7Q621.4 481.2 623.4 472.8M622.7 654.7Q616.0 665.0 611.1 666.0M557.4 585.9Q567.4 583.1 582.7 592.3M525.0 524.3Q533.1 531.2 552.1 530.0M681.3 628.8Q682.7 644.3 676.7 655.4M710.4 506.5Q717.7 516.6 732.2 520.6M715.5 480.0Q709.6 486.4 710.7 498.7M664.1 611.0Q668.6 620.8 666.6 637.0M615.2 635.8Q608.5 637.9 599.6 647.6M504.8 467.5Q498.7 477.1 494.9 486.3M492.5 435.5Q488.4 441.2 481.2 440.0M494.5 565.3Q490.8 576.1 498.3 575.0M696.8 539.3Q693.9 557.3 692.7 564.5M668.7 617.4Q660.3 616.0 659.0 622.2M473.8 437.0Q488.7 443.2 492.8 439.6M468.3 565.5Q468.9 580.5 475.4 593.8M632.6 649.8Q624.7 664.1 625.1 667.2M732.6 477.1Q745.1 485.8 747.9 484.7M688.6 436.1Q703.3 438.0 706.3 450.6M491.3 602.4Q485.4 609.5 477.4 610.3M480.0 501.1Q481.5 506.2 490.9 517.5M490.8 584.2Q487.9 583.0 496.2 571.4M512.9 644.5Q516.3 644.6 521.0 654.3M714.7 622.9Q716.0 630.7 709.6 638.9" fill="none" stroke="#3a3004" stroke-width=".9" opacity=".5" transform="translate(1.2,0.6)"/><path d="M674.9 265.7Q679.4 269.3 681.4 272.3M590.3 422.2Q594.0 427.2 601.7 434.9M711.9 306.9Q717.7 315.8 725.7 319.7M585.0 445.4Q597.0 452.1 607.0 462.2M648.6 296.5Q651.9 304.1 656.9 305.7M739.7 433.9Q747.6 435.8 750.8 443.0M692.1 298.1Q694.4 301.3 692.9 306.4M589.5 235.4Q589.8 244.6 593.8 254.5M724.6 281.9Q725.1 288.5 729.5 291.8M689.5 277.3Q694.1 280.4 697.3 283.5M612.9 279.3Q619.6 290.6 622.5 300.8M600.4 249.1Q604.3 254.5 605.6 265.3M706.9 307.1Q709.7 317.4 712.6 333.5M724.3 337.5Q723.7 346.3 726.9 351.1M629.2 270.1Q632.5 278.7 641.8 287.1M643.0 345.9Q653.9 355.8 661.0 361.3M621.2 387.9Q625.7 400.1 635.6 407.8M732.0 341.4Q737.0 347.1 741.5 358.6M734.3 283.1Q736.5 288.5 741.7 290.2M570.3 255.7Q569.4 262.1 574.4 267.3M665.9 347.4Q669.8 353.6 669.3 357.1M572.9 261.5Q576.4 267.4 582.5 277.9M636.0 264.4Q639.6 277.1 647.4 288.8M695.7 270.3Q698.2 283.8 702.1 298.2M712.0 348.0Q721.9 358.8 728.5 371.5M607.1 307.0Q617.0 321.9 623.2 331.8M707.6 417.2Q718.1 425.7 723.1 428.9M608.6 325.8Q611.9 330.5 614.9 340.5M640.8 343.5Q648.1 348.4 649.8 349.9M729.0 371.1Q734.6 381.7 735.6 397.8M677.3 292.1Q680.0 301.2 682.2 305.3M673.7 288.9Q680.6 295.3 682.2 304.2M618.4 374.2Q629.2 381.2 634.5 387.9M612.0 335.3Q612.4 338.0 617.3 345.2M616.4 322.4Q618.3 327.7 625.1 332.5M712.0 366.1Q715.1 377.4 721.8 386.2M645.7 352.8Q648.2 359.6 653.1 369.6M603.8 345.2Q607.0 352.8 616.0 362.1M715.8 286.3Q718.8 297.6 724.3 303.1M616.7 401.0Q622.4 403.8 623.7 407.4M575.9 318.4Q580.1 326.9 589.0 338.7M732.9 393.8Q737.7 400.1 744.3 404.2M672.9 417.7Q676.5 428.6 677.3 436.6M697.9 337.2Q703.5 346.3 704.1 359.9M717.4 235.9Q720.3 248.7 723.2 256.0M665.1 324.9Q669.3 337.3 672.2 351.1M644.1 333.4Q645.8 340.6 648.7 347.2M632.3 304.2Q635.7 316.8 639.2 330.0M597.2 300.4Q605.4 304.8 612.6 314.2M726.0 304.6Q731.6 315.8 731.6 330.5M639.6 430.8Q643.7 433.3 647.0 436.0M726.1 401.3Q733.2 414.6 740.1 427.8M684.9 318.7Q690.4 329.8 697.7 335.5M683.4 347.9Q689.1 353.5 695.9 358.3M665.5 424.2Q666.1 434.2 667.4 442.8M739.3 308.8Q743.5 319.1 751.6 331.7M736.2 412.6Q741.1 418.3 741.3 421.7M708.6 447.9Q708.0 455.1 711.5 464.9M654.5 343.6Q659.6 348.3 663.2 351.9M626.8 448.7Q628.0 454.5 630.3 456.9M618.7 383.5Q626.8 388.2 630.8 391.8M681.9 277.3Q685.5 286.9 692.0 294.8M658.0 449.4Q659.5 455.0 665.5 464.7M697.9 257.9Q702.6 263.6 707.0 265.4M672.3 408.4Q677.2 409.9 678.8 413.5M690.2 311.1Q692.9 318.2 700.3 320.6M666.9 310.0Q668.6 319.3 675.7 323.9M667.0 441.3Q671.3 447.7 678.7 459.5M727.9 418.8Q738.6 428.3 745.5 440.2M670.4 441.4Q676.1 453.2 684.9 466.4" fill="none" stroke="#8a6a06" stroke-width="1.3" opacity=".4"/><path d="M594 233Q597 262 610 300Q618 322 632 345M607 232Q622 262 640 300Q650 322 668 336M580 345Q600 356 601 368M571 250Q566 285 572 322" fill="none" stroke="#6a5a08" stroke-width="1.6" opacity=".55"/><polygon points="522.0,520.0 528.0,516.0 538.7,525.3 540.0,536.0 536.0,542.7 528.0,543.3 522.7,537.3" fill="#a7a8a9"/><polygon points="510.0,521.3 513.3,513.3 520.0,510.7 516.0,517.3 514.7,529.3 511.3,530.7" fill="#a7a8a9"/><polygon points="497.9,532.7 497.9,536.8 494.4,537.6 492.7,534.3 492.2,530.9 494.6,528.7 497.6,529.0" fill="#a7a8a9"/><polygon points="485.4,552.0 484.1,555.3 481.6,554.3 480.2,553.1 479.1,550.3 481.3,548.3 483.8,549.1" fill="#a7a8a9"/><polygon points="510.0,542.7 513.3,544.0 518.7,558.7 524.0,572.0 526.7,576.0 521.3,573.3 514.7,565.3 513.3,554.7" fill="#a7a8a9"/><polygon points="557.3,494.7 565.3,488.0 567.3,489.3 565.3,504.0 562.7,510.7 556.0,506.7" fill="#a7a8a9"/><polygon points="526.7,486.7 533.3,481.3 537.3,482.7 532.0,488.0" fill="#a7a8a9"/><polygon points="548.7,484.0 556.0,480.0 558.7,481.3 552.0,492.0" fill="#a7a8a9"/><polygon points="602.7,524.0 610.7,526.0 609.3,536.0 604.7,540.7 602.0,536.0" fill="#a7a8a9"/><polygon points="570.7,530.7 574.7,528.0 580.7,537.3 577.3,540.0" fill="#a7a8a9"/><polygon points="552.1,546.0 551.4,549.3 548.6,549.7 546.1,547.9 546.1,544.1 548.8,543.1 550.7,543.7" fill="#a7a8a9"/><polygon points="568.4,544.0 567.7,545.5 566.3,546.4 565.2,544.9 565.3,543.2 566.3,541.6 568.3,541.4" fill="#a7a8a9"/><polygon points="576.4,560.0 575.3,563.2 572.5,564.1 570.0,562.0 570.3,558.2 572.5,555.6 574.5,558.0" fill="#a7a8a9"/><polygon points="552.0,573.3 561.3,570.0 563.3,576.0 555.3,577.3" fill="#a7a8a9"/><polygon points="614.3,486.7 613.0,490.3 610.0,490.4 608.4,488.1 608.8,485.6 610.0,482.6 612.6,483.8" fill="#a7a8a9"/><polygon points="518.9,483.5 517.3,486.4 514.6,488.6 513.0,485.0 512.0,481.4 514.7,479.3 517.2,480.8" fill="#a7a8a9"/><polygon points="591.4,468.0 591.3,472.2 588.0,471.1 585.2,470.0 586.4,466.7 588.0,464.6 591.3,463.7" fill="#a7a8a9"/><polygon points="657.3,480.0 662.7,478.0 665.3,484.0 662.0,490.0 658.7,486.7" fill="#a7a8a9"/><polygon points="632.0,488.0 646.7,489.3 648.0,496.0 644.0,498.7 638.7,493.3" fill="#a7a8a9"/><polygon points="620.7,470.0 624.0,469.3 628.7,479.3 626.7,480.7" fill="#a7a8a9"/><polygon points="606.0,484.7 610.7,483.3 614.7,489.3 609.3,489.3" fill="#a7a8a9"/><polygon points="651.7,472.7 650.7,474.9 648.9,475.0 646.6,474.3 647.8,471.8 648.7,469.7 651.2,469.7" fill="#6f7173"/><polygon points="602.7,524.0 610.7,526.7 608.0,536.0 603.3,540.0" fill="#a7a8a9"/><polygon points="620.0,539.3 624.7,528.7 630.0,538.7" fill="#a7a8a9"/><polygon points="659.3,535.3 662.7,534.7 666.0,540.7 662.0,543.3" fill="#a7a8a9"/><polygon points="670.7,517.3 669.8,519.1 668.3,519.7 667.3,518.1 666.6,516.1 668.2,514.5 670.0,515.3" fill="#1f2427"/><polygon points="613.3,514.0 612.7,516.1 610.7,517.2 609.5,515.1 609.4,512.9 610.8,511.3 612.3,512.4" fill="#a7a8a9"/><polygon points="685.0,478.0 688.0,477.0 689.0,488.0 686.5,489.0" fill="#6f7173"/><polygon points="627.5,554.0 626.9,556.4 624.7,557.1 623.7,555.0 623.9,553.1 624.8,551.4 626.5,552.1" fill="#a7a8a9"/><polygon points="658.3,501.3 658.0,503.4 656.2,503.9 654.6,502.6 655.3,500.5 656.3,499.4 657.6,499.9" fill="#1f2427"/><polygon points="665.1,539.5 665.0,542.6 662.3,543.3 659.7,541.5 660.8,538.2 662.5,536.6 665.0,536.3" fill="#a7a8a9"/><polygon points="685.7,574.0 683.2,575.9 681.3,578.0 680.0,575.2 678.6,572.0 681.6,571.6 684.2,570.5" fill="#a7a8a9"/><polygon points="625.2,555.0 624.5,557.3 622.5,557.7 620.9,556.2 621.0,553.8 622.4,551.8 624.3,553.0" fill="#a7a8a9"/><polygon points="644.4,493.0 643.6,496.3 640.7,497.5 639.3,494.3 638.5,491.2 640.8,489.1 643.5,489.9" fill="#a7a8a9"/><polygon points="505.0,455.0 514.0,450.0 540.0,447.0 552.0,449.0 548.0,452.0 520.0,455.0 509.0,459.0" fill="#6f7173"/><polygon points="633.0,441.0 642.0,440.0 652.0,446.0 655.0,456.0 648.0,456.0 640.0,451.0" fill="#1f2427"/><polygon points="638.0,456.0 655.0,457.0 653.0,463.0 644.0,466.0 640.0,461.0" fill="#6f7173"/><polygon points="648.0,466.0 652.0,462.0 655.0,468.0 651.0,471.0" fill="#6f7173"/><polygon points="622.5,389.0 626.5,383.0 627.5,386.0 624.0,394.0" fill="#1f2427"/><polygon points="676.0,409.0 689.0,406.0 684.0,413.0 678.0,419.0" fill="#1f2427"/><polygon points="712.0,420.0 716.0,418.0 715.0,430.0 711.0,434.0" fill="#1f2427"/><polygon points="628.0,428.0 640.0,425.0 641.0,432.0 631.0,434.0" fill="#1f2427"/><polygon points="562.0,424.0 575.0,424.0 575.0,427.0 563.0,428.0" fill="#1f2427"/><polygon points="699.7,400.0 699.4,402.3 697.6,402.3 696.5,400.9 696.1,398.9 697.5,397.5 699.3,398.0" fill="#1f2427"/><polygon points="686.9,377.0 686.3,379.0 684.6,379.1 683.4,377.9 683.6,376.1 684.5,374.3 685.9,375.6" fill="#1f2427"/><polygon points="595.4,313.0 594.3,315.1 592.5,315.7 590.9,314.3 591.5,312.1 592.5,310.5 594.5,310.7" fill="#1f2427"/><polygon points="668.5,425.0 668.3,427.1 666.5,427.5 665.3,426.0 665.6,424.2 666.5,422.3 668.4,422.8" fill="#1f2427"/><polygon points="707.7,431.0 706.0,432.6 704.7,432.8 702.5,432.5 703.5,430.1 704.6,429.1 706.4,428.8" fill="#1f2427"/><polygon points="560.0,435.0 566.0,433.0 567.0,436.0 561.0,438.0" fill="#1f2427"/><polygon points="573.6,556.8 573.1,559.5 570.6,560.9 568.4,558.5 568.3,555.0 570.7,553.4 573.5,553.4" fill="#a7a8a9"/><polygon points="586.0,561.0 585.1,562.3 583.9,563.5 582.6,562.1 583.0,560.2 584.0,558.9 585.1,559.8" fill="#a7a8a9"/><polygon points="614.1,592.9 614.0,594.4 612.8,594.3 611.6,593.8 611.7,592.1 612.7,591.3 614.0,591.4" fill="#a7a8a9"/><polygon points="489.5,595.5 487.8,597.9 485.7,598.9 483.7,597.0 484.5,594.4 485.9,593.3 488.0,592.9" fill="#a7a8a9"/><polygon points="698.9,619.5 697.7,622.5 695.2,622.9 694.0,620.6 693.9,618.4 695.2,616.2 697.6,616.7" fill="#a7a8a9"/><polygon points="504.7,472.3 503.2,474.3 501.4,475.5 499.5,473.9 500.3,471.3 501.4,469.2 503.2,470.4" fill="#a7a8a9"/><polygon points="511.2,507.5 510.7,509.1 509.5,508.6 508.2,508.4 508.3,506.7 509.5,506.4 510.7,506.0" fill="#a7a8a9"/><polygon points="570.3,600.6 569.9,602.8 567.9,604.0 566.4,601.9 566.6,599.4 568.1,598.2 569.6,598.9" fill="#a7a8a9"/><polygon points="584.0,572.7 584.0,575.1 581.9,575.8 580.7,573.7 580.9,571.7 582.1,570.7 583.4,571.2" fill="#a7a8a9"/><polygon points="701.8,624.3 701.1,627.0 698.8,627.8 697.6,625.4 697.0,622.8 698.7,620.0 701.2,621.5" fill="#a7a8a9"/><polygon points="541.3,505.6 540.1,507.2 538.6,508.2 537.8,506.4 537.5,504.7 538.8,503.8 540.2,503.8" fill="#a7a8a9"/><polygon points="648.4,532.1 646.5,534.3 644.3,536.4 642.6,533.6 642.7,530.7 644.4,528.4 646.4,529.9" fill="#a7a8a9"/><polygon points="691.4,601.3 691.0,602.7 689.8,603.0 688.9,602.1 688.7,600.5 689.8,599.6 690.7,600.4" fill="#a7a8a9"/><polygon points="681.0,542.8 681.2,546.5 678.2,547.0 677.0,544.0 676.1,541.2 678.4,539.8 681.2,539.2" fill="#a7a8a9"/><polygon points="484.4,567.6 483.4,569.5 481.5,571.1 480.2,568.8 479.6,566.0 481.7,565.1 484.3,564.2" fill="#a7a8a9"/><polygon points="489.2,521.6 487.0,523.9 485.0,524.3 483.5,522.8 482.4,519.7 484.7,517.1 487.9,517.7" fill="#a7a8a9"/><polygon points="494.4,508.2 493.7,509.7 492.4,510.2 491.8,508.7 491.3,507.4 492.4,506.2 493.6,506.8" fill="#a7a8a9"/><polygon points="654.2,497.5 653.4,499.3 651.8,500.1 650.7,498.5 650.4,496.4 651.9,495.5 653.7,495.3" fill="#a7a8a9"/><polygon points="511.5,583.4 510.5,584.6 509.6,584.8 508.6,584.2 508.3,582.5 509.5,581.9 511.0,581.7" fill="#a7a8a9"/><polygon points="494.4,535.2 493.2,536.5 492.0,537.5 490.9,536.1 490.5,534.1 492.0,533.2 493.3,533.7" fill="#a7a8a9"/><polygon points="695.0,594.5 694.1,595.9 692.7,597.3 691.4,595.6 691.5,593.5 692.7,591.7 694.0,593.2" fill="#6f7173"/><polygon points="516.6,531.1 516.3,534.0 513.9,534.3 511.4,533.0 511.8,529.5 513.9,527.7 516.7,527.6" fill="#a7a8a9"/><polygon points="490.2,623.3 489.7,625.0 488.3,625.1 486.7,624.5 486.9,622.3 488.2,621.0 489.6,621.8" fill="#a7a8a9"/><polygon points="647.9,521.0 647.4,522.3 646.2,523.0 645.4,521.7 644.6,519.8 646.3,519.5 647.7,519.2" fill="#a7a8a9"/><polygon points="488.3,560.3 487.3,562.0 485.9,561.9 484.2,561.5 484.7,559.5 485.7,557.9 486.9,559.2" fill="#a7a8a9"/><polygon points="556.1,540.2 553.9,542.6 551.6,544.6 550.0,541.7 549.3,538.4 551.8,537.0 554.3,537.2" fill="#a7a8a9"/><polygon points="601.7,604.3 601.0,605.9 599.7,606.2 598.5,605.2 598.6,603.5 599.7,602.4 600.8,603.1" fill="#a7a8a9"/><polygon points="679.7,596.8 679.6,598.5 678.1,598.9 677.3,597.4 677.4,596.1 678.0,594.1 679.5,595.2" fill="#a7a8a9"/><polygon points="640.8,615.8 639.6,617.1 638.4,617.7 637.7,616.4 637.8,615.2 638.5,614.2 639.8,614.1" fill="#6f7173"/><polygon points="674.4,563.5 673.8,565.8 671.9,565.6 670.1,564.9 670.1,562.2 671.7,560.4 673.7,561.4" fill="#a7a8a9"/><polygon points="475.8,619.2 475.0,620.6 473.7,621.6 472.3,620.3 472.5,618.2 473.8,617.8 475.0,617.9" fill="#a7a8a9"/><polygon points="527.4,597.7 527.1,600.3 525.0,599.8 523.6,598.8 523.5,596.5 524.7,594.2 526.7,595.6" fill="#a7a8a9"/><polygon points="507.5,581.7 507.0,582.9 505.8,583.7 504.7,582.6 505.2,581.0 505.9,579.6 507.3,579.9" fill="#a7a8a9"/><polygon points="598.8,602.1 597.9,604.4 595.8,605.5 593.9,603.6 594.6,601.0 595.9,599.2 598.0,599.7" fill="#a7a8a9"/></g>
<path d="M733 135L742 726" stroke="#1f7699" stroke-width="1" fill="none"/>
<polygon points="731,731 734,726 752,726 756,731 756,870 731,870" fill="#5f5fff"/>
<polygon points="822,805 828,803 838,806 838,822 812,870 780,870" fill="#ff0000"/>
</g>
</svg>
</main>
<!-- chrome -->
<section id="app-chrome">
<div class="abs" id="titlebar" style="left:0;top:0;width:1600px;height:20px;background:linear-gradient(90deg,#6a94d3 0,#6c93d2 200px,#7196d3 600px,#7896d1 900px,#7d97d0 1100px,#8fa9e4 1170px,#8fa9e4 1280px,#7f9ad4 1340px,#7b97d2 1600px);"></div>
<div class="abs" style="left:0;top:0;width:1600px;height:20px;background:linear-gradient(180deg,rgba(255,255,255,.0) 0,rgba(255,255,255,.05) 60%,rgba(255,255,255,.25) 100%);"></div>
<div class="abs" style="left:0;top:20px;width:1600px;height:1px;background:#b7c7eb;"></div><div class="abs" style="left:0;top:21px;width:1600px;height:1px;background:#3a455f;"></div>
<svg width="17" height="18" viewBox="0 0 16 16" preserveAspectRatio="none" style="left:0;top:1.5px"><path d="M0 0H14.5L16 1.5V12.5L12.5 16H0Z" fill="#1aa3e0"/><path d="M11.8 5.4H7.2Q5.3 5.4 5.3 7.3V8.7Q5.3 10.6 7.2 10.6H11.8" fill="none" stroke="#fff" stroke-width="2.3"/></svg>
<div class="abs" style="left:14px;top:3px;width:182px;height:14px;border-radius:7px;background:#fff;opacity:.42;filter:blur(5px)"></div>
<span class="t" style="left:20.5px;top:4.0px;font-size:12.2px;line-height:14px;letter-spacing:-0.29px;color:#000;">CFFFP_кролик - Ultimaker Cura</span><div class="abs" style="left:1494px;top:-1px;width:103px;height:19.5px;border:1px solid #37435c;border-radius:0 0 5px 5px;box-sizing:border-box;overflow:hidden;box-shadow:0 0 0 1px rgba(255,255,255,.35)"><div class="abs" style="left:0;top:0;width:27px;height:19px;background:linear-gradient(180deg,#c3d0ea 0,#a9bce0 48%,#8199cd 52%,#8fa8d8 100%);border-right:1px solid #4a5878"></div><div class="abs" style="left:28px;top:0;width:26px;height:19px;background:linear-gradient(180deg,#c3d0ea 0,#a9bce0 48%,#8199cd 52%,#8fa8d8 100%);border-right:1px solid #4a5878"></div><div class="abs" style="left:55px;top:0;width:48px;height:19px;background:linear-gradient(180deg,#e2a99c 0,#d6806f 48%,#c3442d 52%,#cf5e40 100%);"></div></div>
<svg width="103" height="18" viewBox="0 0 103 18" style="left:1494px;top:0"><rect x="9" y="9" width="11" height="3.4" fill="#fff" stroke="#4a4f5c" stroke-width="1"/><rect x="39.3" y="3.3" width="6.4" height="6.4" fill="none" stroke="#4a4f5c" stroke-width="3.6"/><rect x="39.3" y="3.3" width="6.4" height="6.4" fill="none" stroke="#f4f4f4" stroke-width="2.4"/><rect x="36.3" y="6.3" width="6.4" height="6.4" fill="#7d95c8" stroke="#4a4f5c" stroke-width="3.6"/><rect x="36.3" y="6.3" width="6.4" height="6.4" fill="#6f86bc" stroke="#f4f4f4" stroke-width="2.4"/><path d="M75.8 4.8L83.2 11.4M83.2 4.8L75.8 11.4" stroke="#5a2a22" stroke-width="5.2" fill="none"/><path d="M75.8 4.8L83.2 11.4M83.2 4.8L75.8 11.4" stroke="#fff" stroke-width="3.4" fill="none"/></svg>
<div class="abs" id="menubar" style="left:0;top:22px;width:1600px;height:19px;background:#fff;"></div>
<span class="t" style="left:3.5px;top:24.0px;font-size:11.9px;line-height:14px;letter-spacing:0.07px;color:#000;">Файл</span><span class="t" style="left:39.5px;top:24.0px;font-size:11.9px;line-height:14px;letter-spacing:-0.11px;color:#000;">Правка</span><span class="t" style="left:85.5px;top:24.0px;font-size:11.9px;line-height:14px;letter-spacing:-0.01px;color:#000;">Вид</span><span class="t" style="left:113.5px;top:24.0px;font-size:11.9px;line-height:14px;letter-spacing:0.01px;color:#000;">Параметры</span><span class="t" style="left:184.0px;top:24.0px;font-size:11.9px;line-height:14px;letter-spacing:-0.02px;color:#000;">Расширения</span><span class="t" style="left:259.5px;top:24.0px;font-size:11.9px;line-height:14px;letter-spacing:0.24px;color:#000;">Настройки</span><span class="t" style="left:327.0px;top:24.0px;font-size:11.9px;line-height:14px;letter-spacing:-0.24px;color:#000;">Справка</span><div class="abs" style="left:114px;top:36.5px;width:8px;height:1px;background:#000"></div>
<div class="abs" id="header" style="left:0;top:41px;width:1600px;height:72px;background:linear-gradient(90deg,#0a0842 0,#0e0c4a 20%,#17155b 40%,#1a185f 55%,#161459 70%,#0e0c4a 86%,#0a0842 100%);"></div>
<span class="t" style="left:13.0px;top:51.0px;font-size:25.4px;line-height:28px;letter-spacing:0.86px;color:#fff;font-weight:700;">Ultimaker</span><span class="t" style="left:144.5px;top:51.0px;font-size:25.4px;line-height:28px;letter-spacing:0.36px;color:#fff;-webkit-text-stroke:0.8px #0b0945;">Cura</span><span class="t" style="left:566.0px;top:58.0px;font-size:12.8px;line-height:15px;letter-spacing:0.17px;color:#8483a6;">ПОДГОТОВКА</span><div class="abs" style="left:683px;top:51px;width:254px;height:28px;background:#fff;border-radius:2px"></div>
<span class="t" style="left:706.5px;top:58.0px;font-size:12.8px;line-height:15px;letter-spacing:-0.09px;color:#0d0b45;">ПРЕДВАРИТЕЛЬНЫЙ ПРОСМОТР</span><span class="t" style="left:966.5px;top:58.0px;font-size:12.8px;line-height:15px;letter-spacing:0.46px;color:#8483a6;">МОНИТОР</span><div class="abs" style="left:1465px;top:53px;width:62px;height:24px;border:1px solid #c9c9dc;border-radius:2px;box-sizing:border-box"></div>
<span class="t" style="left:1473.0px;top:60.0px;font-size:11px;line-height:12px;letter-spacing:0.51px;color:#e6e6f0;">Магазин</span><div class="abs" style="left:1539px;top:53px;width:49px;height:24px;border:1px solid #c9c9dc;border-radius:2px;box-sizing:border-box"></div>
<span class="t" style="left:1547.0px;top:60.0px;font-size:11px;line-height:12px;letter-spacing:0.44px;color:#e6e6f0;">Войти</span><div class="abs" style="left:1518px;top:44px;width:18px;height:18px;border-radius:9px;background:#ff0000"></div>
<span class="t" style="left:1521.0px;top:49.0px;font-size:10px;line-height:11px;letter-spacing:0.30px;color:#fff;">9+</span><div class="abs" id="stagemenu" style="left:48px;top:89px;width:1048px;height:50px;background:#272c30;border-radius:3px 0 0 3px;border-bottom:2px solid #f2f2f2;box-sizing:border-box;box-shadow:0 0 3px rgba(0,0,0,.5)"></div>
<div class="abs" style="left:324px;top:89px;width:1px;height:48px;background:#454a4e"></div>
<span class="t" style="left:60.0px;top:107.0px;font-size:12px;line-height:14px;letter-spacing:0.96px;color:#85898c;">Просмотр типа</span><span class="t" style="left:168.0px;top:107.0px;font-size:12px;line-height:14px;letter-spacing:0.93px;color:#f4f4f4;">Просмотр слоёв</span><svg width="10" height="14" viewBox="0 0 10 14" style="left:301px;top:106.5px"><path d="M8 1.5L2.5 7L8 12.5" fill="none" stroke="#e8e8e8" stroke-width="1.9"/></svg>
<span class="t" style="left:337.0px;top:107.0px;font-size:12px;line-height:14px;letter-spacing:0.70px;color:#85898c;">Цветовая схема</span><span class="t" style="left:447.5px;top:107.0px;font-size:12px;line-height:14px;letter-spacing:0.81px;color:#f4f4f4;">Цвет материала</span><svg width="11" height="11" viewBox="0 0 11 11" style="left:1071px;top:107.5px"><path d="M1.2 10.8L0.6 7.9L6.9 1.6L9.4 4.1L3.1 10.4Z M7.7 0.9Q8.4 0.2 9.1 0.9L10.1 1.9Q10.8 2.6 10.1 3.3L9.9 3.5L7.4 1.0Z" fill="#cfcfcf"/></svg>
<div class="abs" id="printsetup" style="left:1096px;top:89px;width:456px;height:50px;background:#616161;border-radius:0 3px 3px 0;border-bottom:2px solid #f2f2f2;box-sizing:border-box"></div>
<svg width="16" height="16" viewBox="0 0 16 16" style="left:1110px;top:105px"><rect x="0" y="0" width="15.2" height="5.8" fill="#d9d9d9"/><rect x="0" y="8.3" width="11" height="2.7" fill="#d9d9d9"/><rect x="0" y="13.7" width="5.7" height="1.4" fill="#d9d9d9"/></svg>
<span class="t" style="left:1132.5px;top:107.0px;font-size:12px;line-height:14px;letter-spacing:0.59px;color:#f0f0f0;">Draft - 0.2mm</span><svg width="16" height="16" viewBox="0 0 16 16" style="left:1273.5px;top:104.5px"><g fill="none" stroke="#d6d6d6" stroke-width=".9"><rect x="0.5" y="0.5" width="15" height="15" stroke-dasharray="1.2 .6" opacity=".85"/><path d="M0.5 8L8 0.5L15.5 8L8 15.5ZM0.5 0.5L4.25 4.25M15.5 0.5L11.75 4.25M0.5 15.5L4.25 11.75M15.5 15.5L11.75 11.75" opacity=".85"/></g></svg>
<span class="t" style="left:1297.0px;top:107.0px;font-size:12px;line-height:14px;letter-spacing:0.16px;color:#f0f0f0;">20%</span><svg width="16" height="16" viewBox="0 0 16 16" style="left:1353.5px;top:104.5px"><path d="M5 6.4L5.7 5.5L3.7 0.9H13.5L11.6 5.5L15.3 13.6H9.6" fill="none" stroke="#cfcfcf" stroke-width="1"/><path d="M0.4 6.6H4.5V8.9H6.8V12.2H9.4V15.5H0.4Z" fill="#dcdcdc"/></svg>
<span class="t" style="left:1377.0px;top:107.0px;font-size:12px;line-height:14px;letter-spacing:1.00px;color:#f0f0f0;">Выкл</span><svg width="14" height="16" viewBox="0 0 14 16" style="left:1446.5px;top:104.5px"><g stroke="#d4d4d4" fill="none" stroke-width="1"><path d="M0.5 6.5H13.5M0.5 9.5H13.5" /><path d="M3 6.2Q7 8 11 6.2" stroke-width="1.4"/><path d="M7 0V5M7 11V16"/></g><path d="M5.2 2.6L7 5.2L8.8 2.6ZM5.2 13.4L7 10.8L8.8 13.4Z" fill="#d4d4d4"/></svg>
<span class="t" style="left:1469.0px;top:107.0px;font-size:12px;line-height:14px;letter-spacing:0.87px;color:#f0f0f0;">Вкл</span><svg width="11" height="11" viewBox="0 0 11 11" style="left:1528.5px;top:107.5px"><path d="M1.2 10.8L0.6 7.9L6.9 1.6L9.4 4.1L3.1 10.4Z M7.7 0.9Q8.4 0.2 9.1 0.9L10.1 1.9Q10.8 2.6 10.1 3.3L9.9 3.5L7.4 1.0Z" fill="#cfcfcf"/></svg>
<div class="abs" id="toolbar" style="left:-1px;top:320px;width:50px;height:295px;background:#272c30;border:1px solid #3b4044;border-radius:0 4px 4px 0;box-sizing:border-box"></div>
<div class="abs" style="left:0;top:369px;width:48px;height:1px;background:#3b4044"></div>
<div class="abs" style="left:0;top:418px;width:48px;height:1px;background:#3b4044"></div>
<div class="abs" style="left:0;top:467px;width:48px;height:1px;background:#3b4044"></div>
<div class="abs" style="left:0;top:516px;width:48px;height:1px;background:#3b4044"></div>
<div class="abs" style="left:0;top:565px;width:48px;height:1px;background:#3b4044"></div>
<svg width="49" height="295" viewBox="0 320 49 295" style="left:0;top:320px"><g fill="none" stroke="#50555a" stroke-width="1"><path d="M15.3 333.5L32.5 333.5L29.4 343.4L35.8 356.5L12.2 356.5L18.1 343.4Z"/><path d="M12 346H21"/><path d="M20 343L25.2 346L20 349Z" fill="#50555a"/><path d="M19.9 383.5L33.2 383.5L30.9 392.5L35.8 404.5L17.5 404.5L22.1 392.5Z"/><path d="M13.9 390.5L23.6 390.5L21.9 396.5L25.5 404.5L12.2 404.5L15.5 396.5Z" fill="#50555a"/><path d="M15.3 431.5L32.5 431.5L29.4 441.4L35.8 454.5L12.2 454.5L18.1 441.4Z"/><path d="M18 436Q11 436 11 440Q11 444 17 444M30 436Q36.5 436 36.5 440Q36.5 444 30.5 444"/><path d="M15 445H21"/><path d="M20 442L25.2 445L20 448Z" fill="#50555a"/><path d="M16.2 481.5L31.6 481.5L28.8 490.1L34.5 501.5L13.5 501.5L18.8 490.1Z"/><path d="M24 481.5H31.6L28.8 490L34.5 501.5H24Z" fill="#50555a"/><path d="M24 478.5V504.5"/><path d="M12.6 528.5L21.3 528.5L19.8 533.2L23.0 539.5L11.0 539.5L14.0 533.2Z" fill="#50555a"/><path d="M26.6 528.5L35.3 528.5L33.8 533.2L37.0 539.5L25.0 539.5L28.0 533.2Z" stroke-dasharray="1 1" fill="#50555a" fill-opacity=".5"/><path d="M12.6 542.5L21.3 542.5L19.8 547.2L23.0 553.5L11.0 553.5L14.0 547.2Z"/><path d="M26.6 542.5L35.3 542.5L33.8 547.2L37.0 553.5L25.0 553.5L28.0 547.2Z" fill="#50555a"/><path d="M13.5 600.5L16 578.5M16.5 578V601M19.5 578V601M22.5 578V601M25.5 578V592M28.5 578V592M31 578.5L32.5 592" stroke-width="1.3"/><rect x="25.5" y="592.5" width="10" height="10" stroke-dasharray="1.5 1"/></g></svg>
<svg width="12" height="7" viewBox="0 0 12 7" style="left:62px;top:745.5px"><path d="M1 6L6 1L11 6" fill="none" stroke="#c4c4c4" stroke-width="1.5"/></svg>
<span class="t" style="left:86.2px;top:745.0px;font-size:11px;line-height:12px;letter-spacing:0.52px;color:#cfcfcf;">Список объектов</span><svg width="16" height="16" viewBox="0 0 11 11" style="left:60px;top:771px"><path d="M1.2 10.8L0.6 7.9L6.9 1.6L9.4 4.1L3.1 10.4Z M7.7 0.9Q8.4 0.2 9.1 0.9L10.1 1.9Q10.8 2.6 10.1 3.3L9.9 3.5L7.4 1.0Z" fill="#cfcfcf"/></svg>
<span class="t" style="left:88.2px;top:774.0px;font-size:11px;line-height:12px;letter-spacing:0.02px;color:#cfcfcf;">CFFFP_кролик</span><span class="t" style="left:59.9px;top:798.0px;font-size:11px;line-height:12px;letter-spacing:0.03px;color:#cfcfcf;">25.6 x 39.7 x 50.0 мм</span><svg width="140" height="18" viewBox="64 827 140 18" style="left:64px;top:827px"><g stroke="#d6d6d6" stroke-width="1" fill="none"><path d="M72 828L79.5 831.5V840L72 844L64.5 840V831.5Z" fill="#d6d6d6"/><path d="M64.5 831.5L72 835.5L79.5 831.5M72 835.5V844" stroke="#1f2427" stroke-width="1.2"/><path d="M94.5 832.5H105.5V843.5H94.5Z" fill="#d6d6d6"/><path d="M94.5 832.5L98.5 828.5H109.5L105.5 832.5Z" fill="none"/><path d="M105.5 832.5L109.5 828.5V839.5L105.5 843.5Z" fill="none"/><path d="M124.5 832.5H135.5V843.5H124.5Z" fill="none"/><path d="M124.5 832.5L128.5 828.5H139.5L135.5 832.5Z" fill="#d6d6d6"/><path d="M135.5 832.5L139.5 828.5V839.5L135.5 843.5Z" fill="none"/><g transform="translate(324,0) scale(-1,1)"><path d="M154.5 832.5H165.5V843.5H154.5Z" fill="none"/><path d="M154.5 832.5L158.5 828.5H169.5L165.5 832.5Z" fill="none"/><path d="M165.5 832.5L169.5 828.5V839.5L165.5 843.5Z" fill="#d6d6d6"/></g><path d="M184.5 832.5H195.5V843.5H184.5Z" fill="none"/><path d="M184.5 832.5L188.5 828.5H199.5L195.5 832.5Z" fill="none"/><path d="M195.5 832.5L199.5 828.5V839.5L195.5 843.5Z" fill="#d6d6d6"/></g></svg>
<svg width="440" height="24" viewBox="520 827 440 24" style="left:520px;top:827px"><path d="M524.5 830.5L539 839L524.5 848Z" fill="#fff" stroke="#fff" stroke-width="1" stroke-linejoin="round"/><rect x="552.5" y="836.3" width="390" height="5.4" rx="2.7" fill="#f4f4f4"/><circle cx="942.5" cy="839" r="9" fill="#fff"/></svg>
</section>
<!-- panel -->
<aside id="print-settings">
<div class="abs" id="settingspanel" style="left:1096px;top:145px;width:456px;height:498px;background:#272c30;border:1px solid #3a3f43;border-top:none;box-sizing:border-box;box-shadow:0 0 4px rgba(0,0,0,.55);border-radius:2px"></div>
<div class="abs" style="left:1097px;top:146px;width:454px;height:35px;background:#606060"></div>
<span class="t" style="left:1108.0px;top:157.0px;font-size:12px;line-height:14px;letter-spacing:0.94px;color:#f0f0f0;">Параметры печати</span><svg width="13" height="13" viewBox="0 0 13 13" style="left:1527.5px;top:156.5px"><path d="M1.5 1.5L11.5 11.5M11.5 1.5L1.5 11.5" stroke="#f2f2f2" stroke-width="2.4" fill="none"/></svg>
<span class="t" style="left:1109.0px;top:201.0px;font-size:13.6px;line-height:15px;letter-spacing:0.04px;color:#ececec;">Профиль</span><div class="abs" style="left:1203px;top:194px;width:336px;height:27px;border:1px solid #44494d;border-radius:3px;box-sizing:border-box"></div>
<span class="t" style="left:1214.8px;top:202.0px;font-size:11px;line-height:12px;letter-spacing:0.42px;color:#e6e6e6;">Draft - 0.2mm</span><svg width="14" height="14" viewBox="0 0 14 14" style="left:1489px;top:200.5px"><path d="M7 0.6L9 5L13.7 5.5L10.2 8.7L11.2 13.4L7 11L2.8 13.4L3.8 8.7L0.3 5.5L5 5Z" fill="#9b9b9b"/></svg>
<svg width="13" height="8" viewBox="0 0 13 8" style="left:1514.5px;top:204px"><path d="M1 1L6.5 6.5L12 1" fill="none" stroke="#9b9b9b" stroke-width="1.6"/></svg>
<div class="abs" style="left:1121px;top:232px;width:361px;height:30px;border:1px solid #44494d;border-radius:2px;box-sizing:border-box;background:#2a2f33"></div>
<svg width="15" height="15" viewBox="0 0 15 15" style="left:1127.5px;top:239.5px"><circle cx="5.8" cy="5.8" r="4.7" fill="none" stroke="#a8a8a8" stroke-width="1.5"/><path d="M9.2 9.2L13.8 13.8" stroke="#a8a8a8" stroke-width="2" /></svg>
<span class="t" style="left:1143.7px;top:242.0px;font-size:11px;line-height:12px;letter-spacing:-0.09px;color:#8c8c8c;font-style:italic;">Параметры поиска</span><div class="abs" style="left:1496px;top:241.7px;width:12px;height:2.1px;background:#ececec"></div><div class="abs" style="left:1496px;top:246.1px;width:12px;height:2.1px;background:#ececec"></div><div class="abs" style="left:1496px;top:250.5px;width:12px;height:2.1px;background:#ececec"></div>
<div class="abs" id="settingslist" style="left:1097px;top:274px;width:454px;height:307px;overflow:hidden">
<span class="t" style="left:32.8px;top:-8.0px;font-size:11px;line-height:12px;letter-spacing:0.31px;color:#d4d4d4;">Подъем головы</span><div class="abs" style="left:286px;top:-14px;width:24px;height:24px;border:1px solid #44494d;border-radius:2px;box-sizing:border-box;background:#2a2f33"></div>
<div class="abs" style="left:24px;top:11px;width:394px;height:24px;background:#4d5154"></div><svg width="16" height="16" viewBox="0 0 16 16" style="left:34.5px;top:15.5px"><path d="M5 6.4L5.7 5.5L3.7 0.9H13.5L11.6 5.5L15.3 13.6H9.6" fill="none" stroke="#b9b9b9" stroke-width="1"/><path d="M0.4 6.6H4.5V8.9H6.8V12.2H9.4V15.5H0.4Z" fill="#e0e0e0"/></svg><span class="t" style="left:66.7px;top:18.0px;font-size:12.4px;line-height:14px;letter-spacing:1.57px;color:#ececec;-webkit-text-stroke:.55px #ececec;">Поддержки</span><svg width="13" height="8" viewBox="0 0 13 8" style="left:393.5px;top:20.0px"><path d="M1 1L6.5 6.5L12 1" fill="none" stroke="#8b9093" stroke-width="1.5"/></svg>
<span class="t" style="left:32.8px;top:44.0px;font-size:11px;line-height:12px;letter-spacing:0.45px;color:#d4d4d4;">Генерация поддержек</span><svg width="13.5" height="13.5" viewBox="0 0 15 15" style="left:261.7px;top:42.8px"><g fill="none" stroke="#9a9a9a" stroke-width="1.7" transform="rotate(-38 7.5 7.5)"><rect x="0.2" y="4.6" width="7.6" height="5.8" rx="2.9"/><rect x="7.2" y="4.6" width="7.6" height="5.8" rx="2.9"/></g></svg><div class="abs" style="left:286px;top:38px;width:24px;height:24px;border:1px solid #44494d;border-radius:2px;box-sizing:border-box;background:#2a2f33"></div>
<div class="abs" style="left:24px;top:63px;width:394px;height:24px;background:#4d5154"></div><svg width="16" height="16" viewBox="0 0 16 16" style="left:34.5px;top:67.5px"><g stroke="#8d9194" fill="none" stroke-width="1"><path d="M1.5 6.5H14.5M1.5 9.5H14.5"/><path d="M4 6.2Q8 8 12 6.2" stroke-width="1.3"/><path d="M8 0V5M8 11V16"/></g><path d="M6.2 2.6L8 5.2L9.8 2.6ZM6.2 13.4L8 10.8L9.8 13.4Z" fill="#8d9194"/></svg><span class="t" style="left:66.7px;top:70.0px;font-size:12.4px;line-height:14px;letter-spacing:1.10px;color:#b9bbbc;-webkit-text-stroke:.55px #b9bbbc;">Тип прилипания к столу</span><svg width="8" height="13" viewBox="0 0 8 13" style="left:396.0px;top:68.5px"><path d="M6.5 1L1.5 6.5L6.5 12" fill="none" stroke="#8b9093" stroke-width="1.5"/></svg>
<div class="abs" style="left:24px;top:89px;width:394px;height:24px;background:#4d5154"></div><svg width="16" height="16" viewBox="0 0 16 16" style="left:34.5px;top:93.5px"><path d="M5 1.5H11.5L10.3 6.5L13.5 14.5H2.5L5.8 6.5Z" fill="none" stroke="#8d9194" stroke-width="1"/><path d="M8 1.5H11.5L10.3 6.5L13.5 14.5H8Z" fill="#a4a7a9"/><path d="M8 0V16" stroke="#8d9194" stroke-width="1"/></svg><span class="t" style="left:66.7px;top:96.0px;font-size:12.4px;line-height:14px;letter-spacing:1.11px;color:#b9bbbc;-webkit-text-stroke:.55px #b9bbbc;">Два экструдера</span><svg width="8" height="13" viewBox="0 0 8 13" style="left:396.0px;top:94.5px"><path d="M6.5 1L1.5 6.5L6.5 12" fill="none" stroke="#8b9093" stroke-width="1.5"/></svg>
<div class="abs" style="left:24px;top:115px;width:394px;height:24px;background:#4d5154"></div><svg width="16" height="16" viewBox="0 0 16 16" style="left:34.5px;top:119.5px"><path d="M3.5 0.8H12.5L11.2 6L14.8 15.2H1.2L4.8 6Z" fill="none" stroke="#b9b9b9" stroke-width="1.1"/><path d="M5 9L7.5 10.5L9.8 8.2M7.5 10.5L6 13L10.8 11.8" fill="none" stroke="#b9b9b9" stroke-width="1"/></svg><span class="t" style="left:66.7px;top:122.0px;font-size:12.4px;line-height:14px;letter-spacing:1.20px;color:#ececec;-webkit-text-stroke:.55px #ececec;">Ремонт объектов</span><svg width="13" height="8" viewBox="0 0 13 8" style="left:393.5px;top:124.0px"><path d="M1 1L6.5 6.5L12 1" fill="none" stroke="#8b9093" stroke-width="1.5"/></svg>
<span class="t" style="left:32.8px;top:148.0px;font-size:11px;line-height:12px;letter-spacing:0.53px;color:#d4d4d4;">Объединение перекрывающихся объёмов</span><div class="abs" style="left:286px;top:142px;width:24px;height:24px;border:1px solid #44494d;border-radius:2px;box-sizing:border-box;background:#2a2f33"></div><svg width="12" height="10" viewBox="0 0 12 10" style="left:292.0px;top:149.0px"><path d="M1 5L4.3 8.3L11 1.3" fill="none" stroke="#f0f0f0" stroke-width="1.9"/></svg>
<span class="t" style="left:32.8px;top:174.0px;font-size:11px;line-height:12px;letter-spacing:0.13px;color:#d4d4d4;">Удаляет все отверстия</span><div class="abs" style="left:286px;top:168px;width:24px;height:24px;border:1px solid #44494d;border-radius:2px;box-sizing:border-box;background:#2a2f33"></div>
<span class="t" style="left:32.8px;top:200.0px;font-size:11px;line-height:12px;letter-spacing:0.56px;color:#d4d4d4;">Обширное сшивание</span><div class="abs" style="left:286px;top:194px;width:24px;height:24px;border:1px solid #44494d;border-radius:2px;box-sizing:border-box;background:#2a2f33"></div>
<span class="t" style="left:32.8px;top:226.0px;font-size:11px;line-height:12px;letter-spacing:0.46px;color:#d4d4d4;">Сохранить отсоединённые поверхности</span><div class="abs" style="left:286px;top:220px;width:24px;height:24px;border:1px solid #44494d;border-radius:2px;box-sizing:border-box;background:#2a2f33"></div>
<span class="t" style="left:32.8px;top:252.0px;font-size:11px;line-height:12px;letter-spacing:0.45px;color:#d4d4d4;">Перекрытие касающихся объектов</span><div class="abs" style="left:286px;top:246px;width:132px;height:24px;border:1px solid #44494d;border-radius:2px;box-sizing:border-box;background:#2a2f33"></div><span class="t" style="left:291.5px;top:252.0px;font-size:11px;line-height:12px;letter-spacing:0.07px;color:#e6e6e6;">0.15</span><span class="t" style="left:391.9px;top:252.0px;font-size:11px;line-height:12px;letter-spacing:0.94px;color:#8a8a8a;">mm</span>
<span class="t" style="left:32.8px;top:278.0px;font-size:11px;line-height:12px;letter-spacing:0.44px;color:#d4d4d4;">Удалить пересечения объектов</span><svg width="13.5" height="13.5" viewBox="0 0 15 15" style="left:261.7px;top:276.8px"><g fill="none" stroke="#9a9a9a" stroke-width="1.7" transform="rotate(-38 7.5 7.5)"><rect x="0.2" y="4.6" width="7.6" height="5.8" rx="2.9"/><rect x="7.2" y="4.6" width="7.6" height="5.8" rx="2.9"/></g></svg><div class="abs" style="left:286px;top:272px;width:24px;height:24px;border:1px solid #44494d;border-radius:2px;box-sizing:border-box;background:#2a2f33"></div>
<span class="t" style="left:32.8px;top:304.0px;font-size:11px;line-height:12px;letter-spacing:0.16px;color:#d4d4d4;">Чередование удаления</span><svg width="13.5" height="13.5" viewBox="0 0 15 15" style="left:261.7px;top:302.8px"><g fill="none" stroke="#9a9a9a" stroke-width="1.7" transform="rotate(-38 7.5 7.5)"><rect x="0.2" y="4.6" width="7.6" height="5.8" rx="2.9"/><rect x="7.2" y="4.6" width="7.6" height="5.8" rx="2.9"/></g></svg><div class="abs" style="left:286px;top:298px;width:24px;height:24px;border:1px solid #44494d;border-radius:2px;box-sizing:border-box;background:#2a2f33"></div>
</div>
<div class="abs" style="left:1523.5px;top:499px;width:8.5px;height:30px;border-radius:4px;background:#8c8f92"></div>
<div class="abs" style="left:1097px;top:581px;width:454px;height:1px;background:#43484c"></div>
<div class="abs" style="left:1109px;top:594px;width:135px;height:32px;background:#efefef;border-radius:3px;box-shadow:inset 0 -2px 0 #cfcfcf"></div>
<svg width="8" height="12" viewBox="0 0 8 12" style="left:1123.3px;top:603.3px"><path d="M6.5 1L1.5 6L6.5 11" fill="none" stroke="#1f6be6" stroke-width="1.7"/></svg>
<span class="t" style="left:1139.2px;top:603.0px;font-size:12px;line-height:14px;letter-spacing:1.03px;color:#1f6be6;">Рекомендован</span><div class="abs" style="left:1097px;top:636px;width:454px;height:6.5px;background:#606060"></div>
<div class="abs" style="left:1315.0px;top:637.2px;width:2.6px;height:2.6px;border-radius:2px;background:#fff"></div><div class="abs" style="left:1322.0px;top:637.2px;width:2.6px;height:2.6px;border-radius:2px;background:#fff"></div><div class="abs" style="left:1329.0px;top:637.2px;width:2.6px;height:2.6px;border-radius:2px;background:#fff"></div>
<div class="abs" style="left:1563px;top:202px;width:30px;height:19px;border:1px solid #4a4f53;box-sizing:border-box;background:#24292d"></div>
<svg width="8" height="4" viewBox="0 0 8 4" style="left:1574.5px;top:220px"><path d="M0 0L4 3.5L8 0" fill="#24292d" stroke="#4a4f53" stroke-width="1"/></svg>
<span class="t" style="left:1569.0px;top:206.0px;font-size:11px;line-height:12px;letter-spacing:-0.12px;color:#f0f0f0;">245</span><div class="abs" style="left:1576px;top:236px;width:6px;height:390px;background:#fbfbfb"></div>
<div class="abs" style="left:1570px;top:226.5px;width:18px;height:18px;border-radius:9px;background:#fff"></div>
<div class="abs" style="left:1570px;top:616.5px;width:18px;height:18px;border-radius:9px;background:#fff"></div>
<div class="abs" id="actionpanel" style="left:1267px;top:723px;width:312px;height:120px;background:#272c30;border:1px solid #3e4347;border-radius:3px;box-sizing:border-box"></div>
<svg width="20" height="20" viewBox="0 0 20 20" style="left:1287px;top:739.6px"><circle cx="10" cy="10" r="8.9" fill="none" stroke="#d4d4d4" stroke-width="1.2"/><path d="M10 4.5V10.3L13 13" fill="none" stroke="#d4d4d4" stroke-width="1.1"/></svg>
<span class="t" style="left:1313.0px;top:743.0px;font-size:13.4px;line-height:15px;letter-spacing:0.22px;color:#ededed;-webkit-text-stroke:.5px #ededed;">1 час 1 минута</span><svg width="20" height="20" viewBox="0 0 20 20" style="left:1538.3px;top:739.5px"><circle cx="10" cy="10" r="9.5" fill="#d2d2d2"/><text x="10" y="15.3" font-family="Liberation Serif, serif" font-style="italic" font-weight="700" font-size="15" text-anchor="middle" fill="#272c30">i</text></svg>
<svg width="17" height="17" viewBox="0 0 17 17" style="left:1289px;top:768.5px"><g stroke="#c4c4c4" fill="none"><path d="M1 0.5V13.5" stroke-width="1.6"/><path d="M3.8 1.5V13" stroke-width="1"/><path d="M6 1.5V13" stroke-width="1"/><path d="M8.2 1.5V16.5" stroke-width="1"/><path d="M10.4 1.5V13" stroke-width="1"/><path d="M12.6 1.5V13" stroke-width="1"/><path d="M15.3 0.5V13.5" stroke-width="1.6"/></g></svg>
<span class="t" style="left:1312.6px;top:772.0px;font-size:11px;line-height:12px;letter-spacing:0.10px;color:#d8d8d8;">3g · 1.05m · руб 3.14</span><div class="abs" style="left:1288px;top:796px;width:270px;height:32px;background:#2a6fe9;border-radius:2px;box-shadow:inset 0 -2px 0 #1f57c2"></div>
<span class="t" style="left:1366.2px;top:804.0px;font-size:12.4px;line-height:14px;letter-spacing:0.40px;color:#fff;">Сохранить в файл</span></aside>
<!-- taskbar -->
<footer id="os-taskbar">
<div class="abs" id="taskbar" style="left:0;top:860px;width:1600px;height:40px;background:linear-gradient(90deg,#6c80ae 0,#6f84b3 110px,#7389c0 135px,#788ec5 500px,#7a90c4 870px,#7b91c5 1010px,#647cb1 1045px,#4e679b 1080px,#475e93 1190px,#3a4f84 1230px,#3a5087 1420px,#445a8e 1455px,#63759c 1480px,#67799f 1560px,#6f80a4 1586px);"></div>
<div class="abs" style="left:0;top:860px;width:1600px;height:40px;background:linear-gradient(180deg,rgba(20,25,40,.9) 0,rgba(20,25,40,.9) 1px,rgba(200,215,245,.75) 1px,rgba(200,215,245,.75) 2px,rgba(255,255,255,.10) 2px,rgba(255,255,255,.02) 50%,rgba(0,0,20,.05) 100%);"></div>
<div class="abs" style="left:129.1px;top:860px;width:50.5px;height:40px;border:1px solid #52628f;border-radius:3px;box-sizing:border-box;background:#a3b4e2;box-shadow:inset 0 0 0 1px rgba(255,255,255,.35)"></div><div class="abs" style="left:126.8px;top:860px;width:50.5px;height:40px;border:1px solid #52628f;border-radius:3px;box-sizing:border-box;background:#a3b4e2;box-shadow:inset 0 0 0 1px rgba(255,255,255,.35)"></div><div class="abs" style="left:124.5px;top:860px;width:50.5px;height:40px;border:1px solid #4a5a86;border-radius:3px;box-sizing:border-box;background:linear-gradient(165deg,#becbef 0,#aab9e6 40%,#9aaddd 70%,#93a7da 100%);box-shadow:inset 0 0 0 1px rgba(255,255,255,.45)"></div>
<div class="abs" style="left:187.0px;top:860px;width:58.0px;height:40px;border:1px solid #4a5a86;border-radius:3px;box-sizing:border-box;background:linear-gradient(165deg,#becbef 0,#aab9e6 40%,#9aaddd 70%,#93a7da 100%);box-shadow:inset 0 0 0 1px rgba(255,255,255,.45)"></div>
<div class="abs" style="left:249.0px;top:860px;width:58.0px;height:40px;border:1px solid #4a5a86;border-radius:3px;box-sizing:border-box;background:linear-gradient(165deg,#becbef 0,#aab9e6 40%,#9aaddd 70%,#93a7da 100%);box-shadow:inset 0 0 0 1px rgba(255,255,255,.45)"></div>
<div class="abs" style="left:311.0px;top:860px;width:58.0px;height:40px;border:1px solid #4a5a86;border-radius:3px;box-sizing:border-box;background:linear-gradient(165deg,#becbef 0,#aab9e6 40%,#9aaddd 70%,#93a7da 100%);box-shadow:inset 0 0 0 1px rgba(255,255,255,.45)"></div>
<div class="abs" style="left:372.5px;top:860px;width:58.5px;height:40px;border:1px solid #4a5a86;border-radius:3px;box-sizing:border-box;background:linear-gradient(165deg,#becbef 0,#aab9e6 40%,#9aaddd 70%,#93a7da 100%);box-shadow:inset 0 0 0 1px rgba(255,255,255,.45)"></div>
<div class="abs" style="left:439.1px;top:860px;width:53.5px;height:40px;border:1px solid #52628f;border-radius:3px;box-sizing:border-box;background:#a3b4e2;box-shadow:inset 0 0 0 1px rgba(255,255,255,.35)"></div><div class="abs" style="left:436.8px;top:860px;width:53.5px;height:40px;border:1px solid #52628f;border-radius:3px;box-sizing:border-box;background:#a3b4e2;box-shadow:inset 0 0 0 1px rgba(255,255,255,.35)"></div><div class="abs" style="left:434.5px;top:860px;width:53.5px;height:40px;border:1px solid #4a5a86;border-radius:3px;box-sizing:border-box;background:linear-gradient(165deg,#becbef 0,#aab9e6 40%,#9aaddd 70%,#93a7da 100%);box-shadow:inset 0 0 0 1px rgba(255,255,255,.45)"></div>
<div class="abs" style="left:497.0px;top:860px;width:58.0px;height:40px;border:1px solid #4a5a86;border-radius:3px;box-sizing:border-box;background:linear-gradient(165deg,#becbef 0,#aab9e6 40%,#9aaddd 70%,#93a7da 100%);box-shadow:inset 0 0 0 1px rgba(255,255,255,.45)"></div>
<div class="abs" style="left:559.0px;top:860px;width:58.0px;height:40px;border:1px solid #4a5a86;border-radius:3px;box-sizing:border-box;background:linear-gradient(165deg,#becbef 0,#aab9e6 40%,#9aaddd 70%,#93a7da 100%);box-shadow:inset 0 0 0 1px rgba(255,255,255,.45)"></div>
<div class="abs" style="left:625.1px;top:860px;width:53.5px;height:40px;border:1px solid #52628f;border-radius:3px;box-sizing:border-box;background:#a3b4e2;box-shadow:inset 0 0 0 1px rgba(255,255,255,.35)"></div><div class="abs" style="left:622.8px;top:860px;width:53.5px;height:40px;border:1px solid #52628f;border-radius:3px;box-sizing:border-box;background:#a3b4e2;box-shadow:inset 0 0 0 1px rgba(255,255,255,.35)"></div><div class="abs" style="left:620.5px;top:860px;width:53.5px;height:40px;border:1px solid #4a5a86;border-radius:3px;box-sizing:border-box;background:linear-gradient(165deg,#becbef 0,#aab9e6 40%,#9aaddd 70%,#93a7da 100%);box-shadow:inset 0 0 0 1px rgba(255,255,255,.45)"></div>
<div class="abs" style="left:682.5px;top:860px;width:58.5px;height:40px;border:1px solid #4a5a86;border-radius:3px;box-sizing:border-box;background:linear-gradient(165deg,#e6edfb 0,#cfdaf5 40%,#bccbef 70%,#b3c4ec 100%);box-shadow:inset 0 0 0 1px rgba(255,255,255,.45)"></div>
<div class="abs" style="left:745.0px;top:860px;width:58.0px;height:40px;border:1px solid #4a5a86;border-radius:3px;box-sizing:border-box;background:linear-gradient(165deg,#becbef 0,#aab9e6 40%,#9aaddd 70%,#93a7da 100%);box-shadow:inset 0 0 0 1px rgba(255,255,255,.45)"></div>
<div class="abs" style="left:807.0px;top:860px;width:58.5px;height:40px;border:1px solid #4a5a86;border-radius:3px;box-sizing:border-box;background:linear-gradient(165deg,#becbef 0,#aab9e6 40%,#9aaddd 70%,#93a7da 100%);box-shadow:inset 0 0 0 1px rgba(255,255,255,.45)"></div>
<svg width="40" height="40" viewBox="0 0 40 40" style="left:7px;top:860px"><defs><linearGradient id="orb" x1="0" y1="0" x2="0" y2="1"><stop offset="0" stop-color="#b4c8dc"/><stop offset=".3" stop-color="#5f8fbe"/><stop offset=".55" stop-color="#0f4f96"/><stop offset=".8" stop-color="#0d78c0"/><stop offset="1" stop-color="#2fd0f4"/></linearGradient></defs><circle cx="20" cy="20" r="18.3" fill="url(#orb)" stroke="#173f78" stroke-width="1"/><circle cx="20" cy="20" r="19.2" fill="none" stroke="#c8d4ea" stroke-width=".7" opacity=".8"/><path d="M11.5 13.5Q15.5 11 19.5 13L18 19.5Q14 17.5 10 20Z" fill="#f0632a"/><path d="M21 13.3Q25 15.5 29.5 13L28 19.5Q23.5 22 19.5 19.8Z" fill="#8fc43c"/><path d="M9.5 21.5Q13.5 19 17.5 21L16 27.5Q12 25.5 8 28Z" fill="#2f8fe0"/><path d="M19 21.3Q23 23.5 27.5 21L26 27.5Q21.5 30 17.5 27.8Z" fill="#f7c32e"/></svg>
<svg width="34" height="34" viewBox="0 0 34 34" style="left:69px;top:863px"><defs><linearGradient id="ali" x1="0" y1="1" x2="1" y2="0"><stop offset="0" stop-color="#b352f6"/><stop offset="1" stop-color="#7a6ef9"/></linearGradient></defs><circle cx="17" cy="17" r="16" fill="url(#ali)"/><path d="M17 8.5Q18.6 8.5 20.2 11.3L24.6 19Q26.8 23 21.5 23.6Q17 24.2 12.5 23.6Q7.2 23 9.4 19L13.8 11.3Q15.4 8.5 17 8.5Z" fill="#fff"/></svg>
<svg width="36" height="36" viewBox="0 0 36 36" style="left:132px;top:862px"><path d="M3 9Q3 7 5 7H13L15 9.5H27Q29 9.5 29 11.5V28H3Z" fill="#e9c667"/><path d="M7 12Q7 10 9 10H17L19 12.5H31Q33 12.5 33 14.5V31H7Z" fill="#f6dd8c" stroke="#d9b24e" stroke-width=".8"/><rect x="9" y="22" width="20" height="9" fill="#8fc3e8" stroke="#5a9bd0" stroke-width="1"/><rect x="12" y="26" width="14" height="5" fill="#e8f2fb"/><rect x="8" y="5" width="4" height="2.5" fill="#3cb043"/><rect x="16" y="6" width="3" height="2.5" fill="#d03a2a"/><rect x="22" y="8" width="3.5" height="2.5" fill="#3a7bd0"/></svg>
<svg width="32" height="32" viewBox="0 0 32 32" style="left:200px;top:864px"><circle cx="16" cy="16" r="15" fill="#f6f6f6" stroke="#d8d8d8" stroke-width=".6"/><path d="M9 7.5L16 17L23 7.5M16 17V26" fill="none" stroke="#e8212b" stroke-width="2.8"/></svg>
<svg width="32" height="32" viewBox="0 0 32 32" style="left:262px;top:864px"><circle cx="16" cy="16" r="15.5" fill="#2aa3e0"/><path d="M6.5 15.8L24.5 8.8Q25.8 8.4 25.5 10L22.6 23.5Q22.3 24.8 21 24L16.5 20.7L14.2 22.9Q13.8 23.3 13.6 22.6L13.3 18.6L21.5 11.3L11.5 17.6L7 16.6Q6 16.2 6.5 15.8Z" fill="#fff"/></svg>
<svg width="34" height="36" viewBox="0 0 34 36" style="left:323px;top:862px"><path d="M12 4L31 6L25 32L6 29Z" fill="#b9e0ee" stroke="#7fa8bb" stroke-width=".8"/><path d="M12 4L31 6L30 10L11 8Z" fill="#e8f4f8"/><path d="M31 6L33 8L27 33L25 32Z" fill="#d8c28a"/><path d="M13 3V7M16 3.3V7.3M19 3.6V7.6M22 3.9V7.9M25 4.2V8.2M28 4.5V8.5" stroke="#777" stroke-width="1"/></svg>
<svg width="34" height="34" viewBox="0 0 34 34" style="left:385px;top:863px"><path d="M17 1.5A15 15 0 1 1 4.6 24.9L1.5 32.5L9.4 29.8A15 15 0 0 1 17 1.5Z" fill="#fff"/><path d="M17 3.5A13 13 0 1 1 6.6 24.4L4.6 29.6L9.9 27.7A13 13 0 0 1 17 3.5Z" fill="#3fc350"/><path d="M12 9.5Q10.5 10 10.5 12.5Q11 17 15 20.5Q19 24 22.5 23.8Q24.8 23 24.8 21.3L21.5 19.3L19.8 21Q16.2 19.5 14 15.5L15.7 14Z" fill="#fff"/></svg>
<svg width="34" height="32" viewBox="0 0 34 32" style="left:444px;top:864px"><g stroke="#3a2a18" stroke-width=".6"><path d="M2 5L24 2L32 6L10 9Z" fill="#c25fb7"/><path d="M2 5V11L10 15V9Z" fill="#8e3a86"/><path d="M10 9L32 6V12L10 15Z" fill="#a8489f"/><path d="M2 13L10 17L32 14V20L10 23L2 19Z" fill="#2c53c9"/><path d="M2 21L10 25L32 22V28L10 31L2 27Z" fill="#2e9a3a"/><path d="M17 3.2L21 2.7L21.5 29.5L17.5 30Z" fill="#c9962f"/></g><rect x="17.6" y="13" width="3.6" height="5" fill="#e8e8e8" stroke="#333" stroke-width=".5"/></svg>
<svg width="36" height="34" viewBox="0 0 36 34" style="left:508px;top:863px"><rect x="3" y="3" width="30" height="22" rx="1.5" fill="#4a96dc" stroke="#2d6fb2" stroke-width="1"/><rect x="5" y="5" width="26" height="18" fill="#5aa6ea"/><circle cx="12" cy="11" r="4.2" fill="none" stroke="#fff" stroke-width="1.4"/><path d="M12 6.8A4.2 4.2 0 0 1 16.2 11H12Z" fill="#f4a62a"/><rect x="20" y="8" width="9" height="3.4" fill="#d8ecfb" stroke="#2d6fb2" stroke-width=".6"/><rect x="20" y="14" width="9" height="3.4" fill="#d8ecfb" stroke="#2d6fb2" stroke-width=".6"/><circle cx="10" cy="18" r="1.2" fill="#f4a62a"/><circle cx="14" cy="18" r="1.2" fill="#fff"/><ellipse cx="18" cy="28" rx="7" ry="4.5" fill="#d9d9d9" stroke="#9a9a9a" stroke-width=".8"/></svg>
<svg width="34" height="34" viewBox="0 0 34 34" style="left:573px;top:862px"><path d="M5 12L24 3L27 9L8 18Z" fill="#222"/><path d="M9 10.2L13 8.3L14.5 11.5L10.5 13.4ZM16 7L20 5.1L21.5 8.3L17.5 10.2Z" fill="#e8e8e8"/><path d="M8 17L28 13L31 28L11 32Z" fill="#1c1c1c"/><path d="M8 17L28 13L28.6 16L8.6 20Z" fill="#3a3a3a"/><path d="M11 16.5L14.5 15.8L15.2 18.8L11.7 19.5ZM18 15.2L21.5 14.5L22.2 17.5L18.7 18.2Z" fill="#e0e0e0"/></svg>
<svg width="34" height="34" viewBox="0 0 34 34" style="left:630px;top:863px"><rect x="1" y="1" width="32" height="32" fill="#b8e6e6"/><path d="M1 33L33 1V33Z" fill="#9fd9d9"/><text x="15" y="23" font-family="Liberation Sans, sans-serif" font-weight="700" font-size="24" text-anchor="middle" fill="#1e8f96">3</text><text x="24.5" y="31" font-family="Liberation Sans, sans-serif" font-weight="700" font-size="6.5" text-anchor="middle" fill="#0f6f78">MAX</text></svg>
<svg width="34" height="34" viewBox="0 0 34 34" style="left:695px;top:863px"><path d="M1 1H29L33 5V24L24 33H1Z" fill="#1aa7e6"/><path d="M25.5 11.2H15.5Q11.2 11.2 11.2 15.5V18.5Q11.2 22.8 15.5 22.8H25.5" fill="none" stroke="#fff" stroke-width="5"/></svg>
<svg width="34" height="34" viewBox="0 0 34 34" style="left:757px;top:863px"><circle cx="17" cy="17" r="15.5" fill="#1d84d6" stroke="#0f5fa8" stroke-width="1"/><path d="M17 1.5V32.5M1.5 17H32.5M6 6Q17 14 28 6M6 28Q17 20 28 28" fill="none" stroke="#0f5fa8" stroke-width="1" opacity=".7"/><path d="M9 9L19 5.5L22 7L23 14L12 17.5Z" fill="#8fd04a" stroke="#4f8f1c" stroke-width=".7"/><path d="M12 20L23 16.5L26 18L26.5 25L15 28.5Z" fill="#8fd04a" stroke="#4f8f1c" stroke-width=".7"/><path d="M11 11.5L21 8.3L21.7 13L12.6 16Z" fill="#eaf7d8"/><path d="M14 22.5L24.7 19.3L25 24L15.6 27Z" fill="#eaf7d8"/></svg>
<svg width="32" height="32" viewBox="0 0 32 32" style="left:820px;top:864px"><circle cx="16" cy="16" r="15" fill="#f6f6f6" stroke="#d8d8d8" stroke-width=".6"/><path d="M9 7.5L16 17L23 7.5M16 17V26" fill="none" stroke="#e8212b" stroke-width="2.8"/></svg>
<span class="t" style="left:1190.5px;top:871.0px;font-size:11.8px;line-height:14px;letter-spacing:-0.02px;color:#fff;">RU</span><svg width="18" height="18" viewBox="0 0 18 18" style="left:1220.4px;top:871.5px"><rect x="1.5" y="2" width="15" height="11" fill="#f4f4f4" stroke="#c8c8c8" stroke-width=".5"/><path d="M4.5 10Q5 6.5 10 6L13.5 5V7L10.5 7.8Q8 8.3 7.5 10Z" fill="#111"/><rect x="3.5" y="13" width="12" height="4" fill="#222"/></svg>
<svg width="18" height="18" viewBox="0 0 18 18" style="left:1244.8px;top:871.5px"><circle cx="9" cy="9" r="8" fill="#58b12a" stroke="#e8f6dc" stroke-width="1"/><path d="M5.5 5V10.5Q5.5 12.8 7.5 12.8Q9.3 12.8 9.8 11.2Q10.4 12.8 12.5 12.6M9.8 5V11.2M7 12.8L6.6 15.5" fill="none" stroke="#fff" stroke-width="1.8"/></svg>
<svg width="18" height="18" viewBox="0 0 18 18" style="left:1269.0px;top:871.5px"><rect x="2" y="2" width="14" height="14" fill="#1b1b1b" stroke="#8c8c8c" stroke-width="1.4"/><path d="M9 5.5L10 8H12.6L10.5 9.6L11.3 12.2L9 10.6L6.7 12.2L7.5 9.6L5.4 8H8Z" fill="#f2c21a"/></svg>
<svg width="18" height="18" viewBox="0 0 18 18" style="left:1293.0px;top:871.5px"><circle cx="9" cy="9" r="7.6" fill="#f6f6f6"/><path d="M5.3 4.6L9 9.7L12.7 4.6M9 9.7V14.4" fill="none" stroke="#e8212b" stroke-width="1.7"/></svg>
<svg width="18" height="18" viewBox="0 0 18 18" style="left:1316.6px;top:871.5px"><circle cx="8.5" cy="10" r="3.2" fill="#d63a2a"/><circle cx="3.5" cy="11.5" r="2" fill="#b9a9a0"/><circle cx="13.5" cy="10" r="2" fill="#c9c0b8"/><circle cx="9" cy="14.5" r="1.6" fill="#b33"/><path d="M8.5 10L13 3.5" stroke="#e8e8e8" stroke-width="1.5"/><path d="M11.5 3L14.2 2.6L13.8 5.6Z" fill="#f0f0f0"/></svg>
<svg width="18" height="18" viewBox="0 0 18 18" style="left:1341.0px;top:871.5px"><path d="M4 3L14 1.5L13.5 16L4.5 14.5Z" fill="#5aa9e8" stroke="#2f78bd" stroke-width=".6"/><rect x="6" y="4" width="2.6" height="2.4" fill="#e8502a"/><rect x="9.4" y="3.6" width="2.6" height="2.4" fill="#7fc43c"/><rect x="6" y="7" width="2.6" height="2.4" fill="#3a7bd0"/><rect x="9.4" y="6.6" width="2.6" height="2.4" fill="#f4c32e"/><ellipse cx="9" cy="8" rx="8" ry="3.6" fill="none" stroke="#f2a22c" stroke-width="1.4" transform="rotate(-18 9 8)"/></svg>
<svg width="18" height="18" viewBox="0 0 18 18" style="left:1364.8px;top:871.5px"><rect x="5" y="1" width="5.5" height="4" fill="#c4c4c4" stroke="#777" stroke-width=".6"/><path d="M3.5 5H12V11Q12 13 9.5 13.5V17H6.5V13.5Q3.5 13 3.5 11Z" fill="#8a8a8a" stroke="#555" stroke-width=".6"/><circle cx="12.5" cy="12.5" r="4.6" fill="#2fa836" stroke="#1c7a22" stroke-width=".6"/><path d="M10.2 12.6L12 14.4L15 10.8" fill="none" stroke="#fff" stroke-width="1.5"/></svg>
<svg width="18" height="18" viewBox="0 0 18 18" style="left:1388.5px;top:871.5px"><path d="M3 2V17" stroke="#f4f4f4" stroke-width="1.6"/><path d="M4 2.5Q8 1 10 3Q12 4.6 15.5 3.5V10Q12 11.5 10 9.8Q8 8 4 9.5Z" fill="#f4f4f4" stroke="#9aa" stroke-width=".5"/><circle cx="12.2" cy="12.8" r="4.6" fill="#e0352b" stroke="#fbe0dd" stroke-width=".8"/><path d="M10.3 10.9L14.1 14.7M14.1 10.9L10.3 14.7" stroke="#fff" stroke-width="1.5"/></svg>
<svg width="18" height="18" viewBox="0 0 18 18" style="left:1412.3px;top:871.5px"><rect x="2.5" y="3.5" width="8" height="12.5" rx="1" fill="none" stroke="#d8d8d8" stroke-width="1.4"/><path d="M9 6.5H15V10Q15 12 13 12.5V16H11V12.5Q9 12 9 10Z" fill="#f2f2f2" stroke="#666" stroke-width=".5"/><path d="M10.5 2.5V6.5M13.5 2.5V6.5" stroke="#f2f2f2" stroke-width="1.4"/><path d="M3 10L9.5 16.5M9.5 10L3 16.5" stroke="#f21c1c" stroke-width="2"/></svg>
<svg width="18" height="18" viewBox="0 0 18 18" style="left:1437.0px;top:871.5px"><g fill="#fff" stroke="#5a6a8c" stroke-width=".5"><rect x="1.5" y="12.5" width="2.4" height="2.5"/><rect x="4.8" y="10.5" width="2.4" height="4.5"/><rect x="8.1" y="8" width="2.4" height="7"/><rect x="11.4" y="5.5" width="2.4" height="9.5"/><rect x="14.7" y="3" width="2.4" height="12"/></g></svg>
<svg width="18" height="18" viewBox="0 0 18 18" style="left:1461.0px;top:871.5px"><path d="M2 6.5H5L9.5 2.5V15.5L5 11.5H2Z" fill="#f4f4f4" stroke="#8a8a8a" stroke-width=".6"/><path d="M11.5 6Q13.2 9 11.5 12M13.5 4.2Q16.5 9 13.5 13.8" fill="none" stroke="#f4f4f4" stroke-width="1.3"/></svg>
<svg width="18" height="18" viewBox="0 0 18 18" style="left:1485.0px;top:871.5px"><ellipse cx="9" cy="9" rx="5.9" ry="8.2" fill="#0f3c86"/><path d="M5.8 5.8L12 11.8L9 14.6V3.4L12 6.2L5.8 12.2" fill="none" stroke="#fff" stroke-width="1.4"/></svg>
<span class="t" style="left:1533.3px;top:866.0px;font-size:12.2px;line-height:14px;letter-spacing:-0.48px;color:#fff;">11:37</span><span class="t" style="left:1519.3px;top:883.0px;font-size:12.2px;line-height:14px;letter-spacing:-0.51px;color:#fff;">13.11.2022</span><div class="abs" style="left:1586px;top:861px;width:15px;height:39px;border:1px solid #3e4a66;box-sizing:border-box;background:linear-gradient(180deg,#95a2c0 0,#8290b0 45%,#66769a 50%,#6f7fa3 100%);box-shadow:inset 1px 0 0 0 rgba(255,255,255,.55), inset 0 0 0 1px rgba(255,255,255,.2)"></div>
</footer>
</body></html>
